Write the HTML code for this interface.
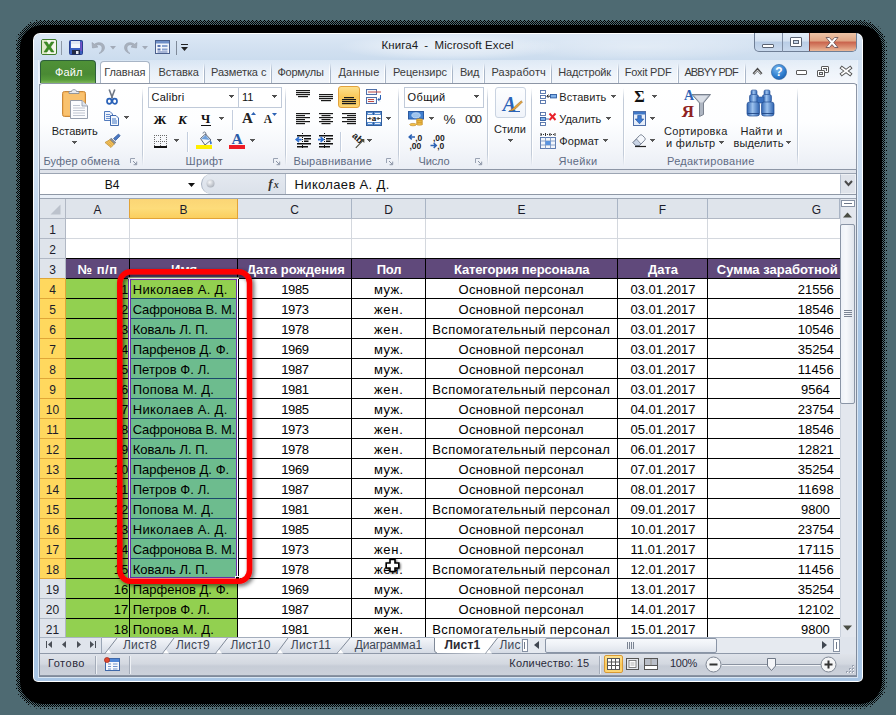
<!DOCTYPE html>
<html><head><meta charset="utf-8"><title>Excel</title>
<style>
*{box-sizing:border-box;margin:0;padding:0}
html,body{width:896px;height:715px;overflow:hidden}
body{background:#4e6a72;font-family:"Liberation Sans",sans-serif;font-size:12px;color:#1e1e1e;position:relative}
.abs{position:absolute}
.t{position:absolute;white-space:nowrap;line-height:1}
svg{position:absolute;overflow:visible}

</style></head>
<body>
<!-- dithered drop shadow -->
<svg style="left:0;top:0" width="896" height="715">
<defs>
<pattern id="d1" width="4" height="4" patternUnits="userSpaceOnUse"><rect x="0" y="0" width="1" height="1" fill="#000"/><rect x="2" y="2" width="1" height="1" fill="#000"/></pattern>
<pattern id="d2" width="2" height="2" patternUnits="userSpaceOnUse"><rect x="0" y="0" width="1" height="1" fill="#000"/><rect x="1" y="1" width="1" height="1" fill="#000"/></pattern>
</defs>
<rect x="15" y="19" width="872" height="690" rx="27" fill="url(#d1)"/>
<rect x="17" y="21" width="868" height="686" rx="25" fill="url(#d2)"/>
<rect x="20" y="25" width="862" height="679" rx="22" fill="#000"/>
</svg>
<!-- window frame -->
<div class="abs" id="win" style="left:33px;top:33px;width:830px;height:649px;border-radius:7px 7px 5px 5px;background:#fff;"></div>
<div class="abs" style="left:34px;top:34px;width:828px;height:647px;border-radius:6px 6px 4px 4px;background:linear-gradient(#d9e6f4 0px,#d3e2f3 50px,#cbddf1 140px,#bdd3ec 200px,#adc9e6 250px,#a8c5e4 300px,#a8c5e4 100%);"></div>
<!-- inner light line -->
<div class="abs" style="left:38px;top:60px;width:820px;height:618px;background:rgba(255,255,255,0.55)"></div>
<!-- client area -->
<div class="abs" style="left:39px;top:84px;width:818px;height:593px;background:#7f8a9b"></div>
<div class="abs" style="left:40px;top:60px;width:816px;height:616px;background:#dfe4ec"></div>
<!-- title bar -->
<div class="abs" style="left:34px;top:34px;width:828px;height:26px;border-radius:6px 6px 0 0;background:linear-gradient(#dce8f5,#d3e1f1 50%,#cbdcee)"></div>
<div class="abs" style="left:340px;top:34px;width:220px;height:26px;background:radial-gradient(ellipse at center,rgba(255,255,255,0.55) 0,rgba(255,255,255,0.3) 45%,rgba(255,255,255,0) 72%)"></div>
<div class="abs" style="left:520px;top:34px;width:240px;height:26px;background:radial-gradient(ellipse at center,rgba(255,255,255,0.35) 0,rgba(255,255,255,0.15) 50%,rgba(255,255,255,0) 75%)"></div>
<!-- excel icon -->
<svg style="left:41px;top:39px" width="16" height="16" viewBox="0 0 16 16">
<rect x="0.5" y="0.5" width="15" height="15" rx="1.5" fill="#f4f7ea" stroke="#3f7d2c"/>
<rect x="1" y="1" width="5" height="14" fill="#dfe9c8"/>
<path d="M3 3 L6 3 L8 6.3 L10.2 3 L13 3 L9.6 8 L13 13 L10.2 13 L8 9.7 L6 13 L3 13 L6.4 8 Z" fill="#3c8f22" stroke="#2c6e18" stroke-width="0.5"/>
</svg>
<div class="abs" style="left:61px;top:41px;width:1px;height:14px;background:#8e9aa8"></div>
<!-- save icon -->
<svg style="left:69px;top:40px" width="14" height="15" viewBox="0 0 14 15">
<rect x="0.5" y="0.5" width="13" height="14" rx="1" fill="#3b5fc0" stroke="#27408f"/>
<rect x="2" y="1" width="9" height="7" fill="#f3f6fb"/>
<rect x="2" y="1" width="9" height="3" fill="#dfe6f2"/>
<rect x="3" y="10" width="8" height="4.5" fill="#222a44"/>
<rect x="7" y="11" width="2.5" height="3" fill="#e8ecf4"/>
<rect x="11.5" y="2" width="1.5" height="9" fill="#7a4fc4"/>
</svg>
<!-- undo -->
<svg style="left:91px;top:40px" width="16" height="15" viewBox="0 0 16 15">
<path d="M1 2.5 L1.5 8 L7 7 L5 5.6 C7.5 4 10.5 4.6 11 7.5 C11.4 10 10 12.3 8 13.5 C11.5 12.8 13.8 10 13.4 6.8 C12.8 2.6 7.8 1.4 3.4 4.2 Z" fill="#a9b1bd" stroke="#979fad" stroke-width="0.6"/>
</svg>
<svg style="left:110px;top:46px" width="6" height="4" viewBox="0 0 6 4"><path d="M0 0H6L3 3.5Z" fill="#a3abb8"/></svg>
<!-- redo -->
<svg style="left:122px;top:40px" width="16" height="15" viewBox="0 0 16 15">
<path d="M15 2.5 L14.5 8 L9 7 L11 5.6 C8.5 4 5.5 4.6 5 7.5 C4.6 10 6 12.3 8 13.5 C4.5 12.8 2.2 10 2.6 6.8 C3.2 2.6 8.2 1.4 12.6 4.2 Z" fill="#a9b1bd" stroke="#979fad" stroke-width="0.6"/>
</svg>
<svg style="left:142px;top:46px" width="6" height="4" viewBox="0 0 6 4"><path d="M0 0H6L3 3.5Z" fill="#a3abb8"/></svg>
<!-- form icon -->
<svg style="left:155px;top:40px" width="15" height="14" viewBox="0 0 15 14">
<rect x="0.5" y="0.5" width="14" height="13" fill="#f2f5fb" stroke="#4a5f8c"/>
<rect x="1" y="1" width="13" height="2.5" fill="#6f8fc8"/>
<rect x="2.5" y="5" width="3" height="2" fill="#5a76b3"/><rect x="7" y="5" width="5.5" height="2" fill="#8aa2cf"/>
<rect x="2.5" y="8.5" width="3" height="2" fill="#5a76b3"/><rect x="7" y="8.5" width="5.5" height="2" fill="#8aa2cf"/>
<rect x="2.5" y="11.5" width="10" height="1" fill="#5a76b3"/>
</svg>
<div class="abs" style="left:176px;top:41px;width:1px;height:14px;background:#7f8a99"></div>
<!-- customize qat arrow -->
<div class="abs" style="left:181px;top:44px;width:7px;height:1px;background:#222"></div>
<svg style="left:181px;top:47px" width="7" height="4" viewBox="0 0 7 4"><path d="M0 0H7L3.5 4Z" fill="#222"/></svg>
<!-- title text -->
<div class="t" style="left:381.60px;top:40.27px;font-size:11.5px;line-height:11.5px;color:#1b1b1b;letter-spacing:0.064px;">Книга4</div>
<div class="t" style="left:424.30px;top:40.27px;font-size:11.5px;line-height:11.5px;color:#1b1b1b;">-</div>
<div class="t" style="left:434.60px;top:40.27px;font-size:11.5px;line-height:11.5px;color:#1b1b1b;letter-spacing:0.069px;">Microsoft Excel</div>
<!-- caption buttons -->
<div class="abs" style="left:754px;top:33px;width:103px;height:19px;border-radius:0 0 5px 5px;border:1px solid #6f7f96;border-top:none;background:linear-gradient(#e3edf8,#d5e2f1 45%,#b9cde6 50%,#c9d9ed)"></div>
<div class="abs" style="left:782px;top:33px;width:1px;height:19px;background:#7f8da3"></div>
<div class="abs" style="left:809px;top:33px;width:47px;height:18px;border-radius:0 0 4px 0;border-left:1px solid #8a4034;background:linear-gradient(#ecc3a6,#e0a584 45%,#c9624c 50%,#d98a6e 75%,#eab898)"></div>
<!-- minimize glyph -->
<div class="abs" style="left:762px;top:44px;width:12px;height:4px;border:1px solid #5a6373;background:#fff;border-radius:1px"></div>
<!-- maximize glyph -->
<div class="abs" style="left:790px;top:37px;width:12px;height:10px;border:1px solid #5a6373;background:#fff;border-radius:1px"></div>
<div class="abs" style="left:793px;top:40px;width:6px;height:4px;border:1px solid #5a6373;background:#c8d7ea"></div>
<!-- close X -->
<svg style="left:825px;top:37px" width="14" height="11" viewBox="0 0 14 11"><path d="M1 0.5H4.4L7 3.4L9.6 0.5H13L8.8 5.5L13 10.5H9.6L7 7.6L4.4 10.5H1L5.2 5.5Z" fill="#fff" stroke="#5c4a52" stroke-width="0.8"/></svg>
<!-- ribbon tabs -->
<div class="abs" style="left:39px;top:60px;width:818px;height:24px;background:linear-gradient(90deg,rgba(255,255,255,0) 0,rgba(255,255,255,0.35) 100%),linear-gradient(#d6e4f3,#e6eef8 45%,#f2f6fb);"></div>
<div class="abs" style="left:40px;top:60px;width:56px;height:23px;background:linear-gradient(#4f9137,#4a8a34 60%,#569a3a 85%,#7fb85a);border-radius:4px 4px 0 0;border:1px solid #2d5f3a;border-bottom:none"></div>
<div class="t" style="left:55.00px;top:66.69px;font-size:11px;line-height:11px;color:#ffffff;letter-spacing:0.113px;">Файл</div>
<div class="abs" style="left:100px;top:61px;width:50px;height:24px;background:#ffffff;border:1px solid #a8b5c6;border-bottom:none;border-radius:4px 4px 0 0"></div>
<div class="t" style="left:104.30px;top:66.69px;font-size:11px;line-height:11px;color:#3b3b3b;letter-spacing:-0.125px;">Главная</div>
<div class="t" style="left:158.50px;top:66.69px;font-size:11px;line-height:11px;color:#3b3b3b;letter-spacing:-0.099px;">Вставка</div>
<div class="t" style="left:211.00px;top:66.69px;font-size:11px;line-height:11px;color:#3b3b3b;letter-spacing:-0.079px;">Разметка с</div>
<div class="t" style="left:277.40px;top:66.69px;font-size:11px;line-height:11px;color:#3b3b3b;letter-spacing:-0.239px;">Формулы</div>
<div class="t" style="left:338.40px;top:66.69px;font-size:11px;line-height:11px;color:#3b3b3b;letter-spacing:0.225px;">Данные</div>
<div class="t" style="left:393.00px;top:66.69px;font-size:11px;line-height:11px;color:#3b3b3b;letter-spacing:-0.017px;">Рецензирс</div>
<div class="t" style="left:460.00px;top:66.69px;font-size:11px;line-height:11px;color:#3b3b3b;letter-spacing:-0.302px;">Вид</div>
<div class="t" style="left:491.40px;top:66.69px;font-size:11px;line-height:11px;color:#3b3b3b;letter-spacing:0.155px;">Разработч</div>
<div class="t" style="left:558.30px;top:66.69px;font-size:11px;line-height:11px;color:#3b3b3b;letter-spacing:-0.169px;">Надстройк</div>
<div class="t" style="left:624.70px;top:66.69px;font-size:11px;line-height:11px;color:#3b3b3b;letter-spacing:-0.245px;">Foxit PDF</div>
<div class="t" style="left:684.40px;top:66.69px;font-size:11px;line-height:11px;color:#3b3b3b;letter-spacing:-0.916px;">ABBYY PDF</div>
<div class="abs" style="left:203px;top:63px;width:1px;height:20px;background:linear-gradient(rgba(255,255,255,0),#ffffff 40%,#ffffff);"></div>
<div class="abs" style="left:204px;top:63px;width:1px;height:20px;background:linear-gradient(rgba(160,175,195,0),#a9b6c8 40%,#a9b6c8);"></div>
<div class="abs" style="left:270px;top:63px;width:1px;height:20px;background:linear-gradient(rgba(255,255,255,0),#ffffff 40%,#ffffff);"></div>
<div class="abs" style="left:271px;top:63px;width:1px;height:20px;background:linear-gradient(rgba(160,175,195,0),#a9b6c8 40%,#a9b6c8);"></div>
<div class="abs" style="left:329px;top:63px;width:1px;height:20px;background:linear-gradient(rgba(255,255,255,0),#ffffff 40%,#ffffff);"></div>
<div class="abs" style="left:330px;top:63px;width:1px;height:20px;background:linear-gradient(rgba(160,175,195,0),#a9b6c8 40%,#a9b6c8);"></div>
<div class="abs" style="left:384px;top:63px;width:1px;height:20px;background:linear-gradient(rgba(255,255,255,0),#ffffff 40%,#ffffff);"></div>
<div class="abs" style="left:385px;top:63px;width:1px;height:20px;background:linear-gradient(rgba(160,175,195,0),#a9b6c8 40%,#a9b6c8);"></div>
<div class="abs" style="left:451px;top:63px;width:1px;height:20px;background:linear-gradient(rgba(255,255,255,0),#ffffff 40%,#ffffff);"></div>
<div class="abs" style="left:452px;top:63px;width:1px;height:20px;background:linear-gradient(rgba(160,175,195,0),#a9b6c8 40%,#a9b6c8);"></div>
<div class="abs" style="left:483px;top:63px;width:1px;height:20px;background:linear-gradient(rgba(255,255,255,0),#ffffff 40%,#ffffff);"></div>
<div class="abs" style="left:484px;top:63px;width:1px;height:20px;background:linear-gradient(rgba(160,175,195,0),#a9b6c8 40%,#a9b6c8);"></div>
<div class="abs" style="left:550px;top:63px;width:1px;height:20px;background:linear-gradient(rgba(255,255,255,0),#ffffff 40%,#ffffff);"></div>
<div class="abs" style="left:551px;top:63px;width:1px;height:20px;background:linear-gradient(rgba(160,175,195,0),#a9b6c8 40%,#a9b6c8);"></div>
<div class="abs" style="left:617px;top:63px;width:1px;height:20px;background:linear-gradient(rgba(255,255,255,0),#ffffff 40%,#ffffff);"></div>
<div class="abs" style="left:618px;top:63px;width:1px;height:20px;background:linear-gradient(rgba(160,175,195,0),#a9b6c8 40%,#a9b6c8);"></div>
<div class="abs" style="left:677px;top:63px;width:1px;height:20px;background:linear-gradient(rgba(255,255,255,0),#ffffff 40%,#ffffff);"></div>
<div class="abs" style="left:678px;top:63px;width:1px;height:20px;background:linear-gradient(rgba(160,175,195,0),#a9b6c8 40%,#a9b6c8);"></div>
<div class="abs" style="left:744px;top:63px;width:1px;height:20px;background:linear-gradient(rgba(255,255,255,0),#ffffff 40%,#ffffff);"></div>
<div class="abs" style="left:745px;top:63px;width:1px;height:20px;background:linear-gradient(rgba(160,175,195,0),#a9b6c8 40%,#a9b6c8);"></div>
<svg style="left:752px;top:67px" width="11" height="9" viewBox="0 0 11 9"><path d="M1.5 7L5.5 2.5L9.5 7" fill="none" stroke="#4a4a4a" stroke-width="2.6" stroke-linejoin="miter"/><path d="M2.2 6.6L5.5 3.2L8.8 6.6" fill="none" stroke="#fff" stroke-width="0.9"/></svg>
<svg style="left:771px;top:64px" width="16" height="16" viewBox="0 0 16 16"><defs><radialGradient id="hg" cx="0.4" cy="0.3" r="0.8"><stop offset="0" stop-color="#7db9ee"/><stop offset="0.6" stop-color="#2f7fd0"/><stop offset="1" stop-color="#1b5aa6"/></radialGradient></defs><circle cx="8" cy="8" r="7.6" fill="url(#hg)" stroke="#2a5f9e" stroke-width="0.6"/><text x="8" y="12.2" font-family="Liberation Sans" font-weight="bold" font-size="12" fill="#fff" text-anchor="middle">?</text></svg>
<div class="abs" style="left:796px;top:70px;width:11px;height:5px;background:#fff;border:1px solid #5a5a5a;border-radius:1px"></div>
<div class="abs" style="left:821px;top:66px;width:8px;height:7px;background:#fff;border:1px solid #5a5a5a;border-radius:1px"></div>
<div class="abs" style="left:823px;top:68px;width:4px;height:3px;background:#e9eef5;border:1px solid #5a5a5a;border-width:1px 1px 0 0"></div>
<div class="abs" style="left:817px;top:70px;width:8px;height:7px;background:#fff;border:1px solid #5a5a5a;border-radius:1px"></div>
<div class="abs" style="left:819px;top:72px;width:4px;height:3px;background:#e9eef5;border:1px solid #5a5a5a"></div>
<svg style="left:840px;top:66px" width="12" height="10" viewBox="0 0 12 10"><path d="M2 2L10 8M10 2L2 8" stroke="#555" stroke-width="3.6" stroke-linecap="square"/><path d="M2 2L10 8M10 2L2 8" stroke="#fff" stroke-width="1.7" stroke-linecap="square"/></svg>
<!-- ribbon body -->
<div class="abs" style="left:39px;top:83px;width:818px;height:87px;background:linear-gradient(#ffffff 0,#fdfeff 45%,#f4f6fa 75%,#eaeef5 100%);border:1px solid #8d96a6;border-radius:3px 3px 0 0"></div>
<svg style="left:61px;top:88px" width="28" height="32" viewBox="0 0 28 32"><rect x="1.5" y="3.5" width="23" height="25" rx="2" fill="#f6b45a" stroke="#c98a3c"/><rect x="3" y="5" width="20" height="22" rx="1" fill="#fbc877" opacity="0.7"/><path d="M8 5.5V3.5H10.5C10.5 1 15.5 1 15.5 3.5H18V5.5Z" fill="#e8ebf0" stroke="#7e8794" stroke-width="0.8"/><path d="M9.5 12.5H21L26.5 18V30.5H9.5Z" fill="#fbfcfe" stroke="#8a94a5" stroke-width="0.9"/><path d="M21 12.5V18H26.5" fill="#dfe5ee" stroke="#8a94a5" stroke-width="0.8"/><path d="M12 17.5H19M12 20H24M12 22.5H24M12 25H24M12 27.5H24" stroke="#b9c0cc" stroke-width="0.9"/></svg>
<div class="t" style="left:51.70px;top:125.69px;font-size:11px;line-height:11px;color:#1e1e1e;letter-spacing:-0.080px;">Вставить</div>
<svg style="left:72px;top:141px" width="5" height="3" viewBox="0 0 5 3" shape-rendering="crispEdges"><path d="M0 0H5L2.5 3Z" fill="#555"/></svg>
<svg style="left:106px;top:89px" width="12" height="16" viewBox="0 0 12 16"><path d="M3.2 0.5L6.6 9.5M8.8 0.5L5.4 9.5" stroke="#6d7684" stroke-width="1.6" fill="none"/><ellipse cx="3.3" cy="12.2" rx="2.3" ry="2.6" fill="none" stroke="#2a62b8" stroke-width="1.7"/><ellipse cx="8.7" cy="12.2" rx="2.3" ry="2.6" fill="none" stroke="#2a62b8" stroke-width="1.7"/></svg>
<svg style="left:104px;top:111px" width="16" height="15" viewBox="0 0 16 15"><path d="M0.5 0.5H6L8.5 3V9.5H0.5Z" fill="#eef3fb" stroke="#3f6cb5" stroke-width="0.9"/><path d="M2 3.5H6M2 5.5H7M2 7.5H7" stroke="#5a86cc" stroke-width="0.9"/><path d="M6.5 4.5H12L14.5 7V14.5H6.5Z" fill="#f4f8fd" stroke="#2d5aa6" stroke-width="0.9"/><path d="M8 8H12M8 10H13M8 12H13" stroke="#3f74c4" stroke-width="1"/></svg>
<svg style="left:124px;top:116px" width="5" height="3" viewBox="0 0 5 3" shape-rendering="crispEdges"><path d="M0 0H5L2.5 3Z" fill="#555"/></svg>
<svg style="left:104px;top:133px" width="17" height="15" viewBox="0 0 17 15"><path d="M9.5 5.5L14.5 1L16.2 2.8L11.5 7.5Z" fill="#4a78c2" stroke="#2f5596" stroke-width="0.7"/><path d="M7.2 5.2L11.8 9.5L10.2 11L5.8 6.8Z" fill="#8a8f98" stroke="#5e636d" stroke-width="0.6"/><path d="M5.8 6.8L10.2 11L7 14.5L1 9.5Z" fill="#f2c15c" stroke="#b98a2e" stroke-width="0.7"/><path d="M3 9.5L7 13M4.5 8.3L8.5 12" stroke="#d79c3a" stroke-width="0.7"/></svg>
<div class="t" style="left:43.40px;top:155.69px;font-size:11px;line-height:11px;color:#5f6c84;letter-spacing:0.129px;">Буфер обмена</div>
<svg style="left:130px;top:158px" width="8" height="8" viewBox="0 0 8 8"><path d="M0.5 5V0.5H5" fill="none" stroke="#9aa3b3"/><path d="M3 3L6.3 6.3M6.7 3.6V6.7H3.6" fill="none" stroke="#8b94a5" stroke-width="1"/></svg>
<div class="abs" style="left:142px;top:88px;width:1px;height:78px;background:linear-gradient(rgba(180,192,210,0),#c3ccd9 15%,#c3ccd9 85%,rgba(180,192,210,0));"></div>
<div class="abs" style="left:143px;top:88px;width:1px;height:78px;background:linear-gradient(rgba(255,255,255,0),#fff 15%,#fff 85%,rgba(255,255,255,0));"></div>
<div class="abs" style="left:148px;top:87px;width:91px;height:21px;background:#fff;border:1px solid #c0cad9"></div>
<div class="abs" style="left:238px;top:87px;width:44px;height:21px;background:#fff;border:1px solid #c0cad9"></div>
<div class="t" style="left:151.50px;top:92.19px;font-size:11px;line-height:11px;color:#111;letter-spacing:0.259px;">Calibri</div>
<div class="t" style="left:242.00px;top:92.19px;font-size:11px;line-height:11px;color:#111;letter-spacing:0.039px;">11</div>
<svg style="left:229px;top:95px" width="5" height="3" viewBox="0 0 5 3" shape-rendering="crispEdges"><path d="M0 0H5L2.5 3Z" fill="#4d4d4d"/></svg>
<svg style="left:272px;top:95px" width="5" height="3" viewBox="0 0 5 3" shape-rendering="crispEdges"><path d="M0 0H5L2.5 3Z" fill="#4d4d4d"/></svg>
<div class="t" style="left:153.57px;top:113.00px;font-size:13px;line-height:13px;color:#111;font-weight:bold;font-family:'Liberation Serif',serif;">Ж</div>
<div class="t" style="left:178.09px;top:113.00px;font-size:13px;line-height:13px;color:#111;font-weight:bold;font-style:italic;font-family:'Liberation Serif',serif;">К</div>
<div class="t" style="left:200.91px;top:112.92px;font-size:12.5px;line-height:12.5px;color:#111;font-weight:bold;font-family:'Liberation Serif',serif;">Ч</div>
<div class="abs" style="left:201px;top:125px;width:10px;height:1px;background:#111;"></div>
<svg style="left:219px;top:117px" width="5" height="3" viewBox="0 0 5 3" shape-rendering="crispEdges"><path d="M0 0H5L2.5 3Z" fill="#555"/></svg>
<div class="abs" style="left:232px;top:110px;width:1px;height:20px;background:#c4cede;"></div>
<div class="abs" style="left:233px;top:110px;width:1px;height:20px;background:#fff;"></div>
<div class="t" style="left:242.08px;top:111.30px;font-size:15px;line-height:15px;color:#222;font-weight:bold;font-family:'Liberation Serif',serif;">A</div>
<svg style="left:251px;top:112px" width="5" height="3" viewBox="0 0 5 3"><path d="M0 3H5L2.5 0Z" fill="#2c62b4"/></svg>
<div class="t" style="left:263.84px;top:114.27px;font-size:11.5px;line-height:11.5px;color:#222;font-weight:bold;font-family:'Liberation Serif',serif;">A</div>
<svg style="left:272px;top:113px" width="5" height="3" viewBox="0 0 5 3"><path d="M0 0H5L2.5 3Z" fill="#2c62b4"/></svg>
<svg style="left:154px;top:135px" width="13" height="13" viewBox="0 0 13 13" shape-rendering="crispEdges"><rect x="0" y="0" width="1" height="1" fill="#6b6b6b"/><rect x="0" y="6" width="1" height="1" fill="#6b6b6b"/><rect x="0" y="0" width="1" height="1" fill="#6b6b6b"/><rect x="6" y="0" width="1" height="1" fill="#6b6b6b"/><rect x="12" y="0" width="1" height="1" fill="#6b6b6b"/><rect x="2" y="0" width="1" height="1" fill="#6b6b6b"/><rect x="2" y="6" width="1" height="1" fill="#6b6b6b"/><rect x="0" y="2" width="1" height="1" fill="#6b6b6b"/><rect x="6" y="2" width="1" height="1" fill="#6b6b6b"/><rect x="12" y="2" width="1" height="1" fill="#6b6b6b"/><rect x="4" y="0" width="1" height="1" fill="#6b6b6b"/><rect x="4" y="6" width="1" height="1" fill="#6b6b6b"/><rect x="0" y="4" width="1" height="1" fill="#6b6b6b"/><rect x="6" y="4" width="1" height="1" fill="#6b6b6b"/><rect x="12" y="4" width="1" height="1" fill="#6b6b6b"/><rect x="6" y="0" width="1" height="1" fill="#6b6b6b"/><rect x="6" y="6" width="1" height="1" fill="#6b6b6b"/><rect x="0" y="6" width="1" height="1" fill="#6b6b6b"/><rect x="6" y="6" width="1" height="1" fill="#6b6b6b"/><rect x="12" y="6" width="1" height="1" fill="#6b6b6b"/><rect x="8" y="0" width="1" height="1" fill="#6b6b6b"/><rect x="8" y="6" width="1" height="1" fill="#6b6b6b"/><rect x="0" y="8" width="1" height="1" fill="#6b6b6b"/><rect x="6" y="8" width="1" height="1" fill="#6b6b6b"/><rect x="12" y="8" width="1" height="1" fill="#6b6b6b"/><rect x="10" y="0" width="1" height="1" fill="#6b6b6b"/><rect x="10" y="6" width="1" height="1" fill="#6b6b6b"/><rect x="0" y="10" width="1" height="1" fill="#6b6b6b"/><rect x="6" y="10" width="1" height="1" fill="#6b6b6b"/><rect x="12" y="10" width="1" height="1" fill="#6b6b6b"/><rect x="12" y="0" width="1" height="1" fill="#6b6b6b"/><rect x="12" y="6" width="1" height="1" fill="#6b6b6b"/><rect x="0" y="12" width="1" height="1" fill="#6b6b6b"/><rect x="6" y="12" width="1" height="1" fill="#6b6b6b"/><rect x="12" y="12" width="1" height="1" fill="#6b6b6b"/><rect x="0" y="11" width="13" height="2" fill="#111"/></svg>
<svg style="left:174px;top:139px" width="5" height="3" viewBox="0 0 5 3" shape-rendering="crispEdges"><path d="M0 0H5L2.5 3Z" fill="#555"/></svg>
<div class="abs" style="left:187px;top:132px;width:1px;height:20px;background:#c4cede;"></div>
<div class="abs" style="left:188px;top:132px;width:1px;height:20px;background:#fff;"></div>
<svg style="left:196px;top:132px" width="17" height="17" viewBox="0 0 17 17"><path d="M4.5 6.5L9.5 2L15 8L9 13Z" fill="#f4f7fb" stroke="#5b6678" stroke-width="1"/><path d="M7 1.5C7 -0.5 9.8 -0.5 9.8 1.5V7" fill="none" stroke="#5b6678" stroke-width="0.9"/><path d="M5 7L9.4 3.2L14 8Z" fill="#6ea0dc"/><path d="M14.5 8.5C16.2 10 16.2 12 15 12.4C13.8 12 13.4 10.4 14.5 8.5Z" fill="#3b76c8"/></svg>
<div class="abs" style="left:196px;top:145px;width:16px;height:4px;background:#ffef00;"></div>
<svg style="left:217px;top:139px" width="5" height="3" viewBox="0 0 5 3" shape-rendering="crispEdges"><path d="M0 0H5L2.5 3Z" fill="#555"/></svg>
<div class="t" style="left:231.40px;top:131.38px;font-size:15.5px;line-height:15.5px;color:#2a5ba8;font-weight:bold;font-family:'Liberation Serif',serif;">A</div>
<div class="abs" style="left:229px;top:145px;width:16px;height:4px;background:#ee1c25;"></div>
<svg style="left:250px;top:139px" width="5" height="3" viewBox="0 0 5 3" shape-rendering="crispEdges"><path d="M0 0H5L2.5 3Z" fill="#555"/></svg>
<div class="t" style="left:185.50px;top:155.69px;font-size:11px;line-height:11px;color:#5f6c84;letter-spacing:0.359px;">Шрифт</div>
<svg style="left:273px;top:158px" width="8" height="8" viewBox="0 0 8 8"><path d="M0.5 5V0.5H5" fill="none" stroke="#9aa3b3"/><path d="M3 3L6.3 6.3M6.7 3.6V6.7H3.6" fill="none" stroke="#8b94a5" stroke-width="1"/></svg>
<div class="abs" style="left:285px;top:88px;width:1px;height:78px;background:linear-gradient(rgba(180,192,210,0),#c3ccd9 15%,#c3ccd9 85%,rgba(180,192,210,0));"></div>
<div class="abs" style="left:286px;top:88px;width:1px;height:78px;background:linear-gradient(rgba(255,255,255,0),#fff 15%,#fff 85%,rgba(255,255,255,0));"></div>
<svg style="left:296px;top:90px" width="16" height="8" viewBox="0 0 16 8"><rect x="0" y="0" width="14" height="1.2" fill="#1a1a1a"/><rect x="0" y="2" width="14" height="1.2" fill="#1a1a1a"/><rect x="0" y="4" width="14" height="1.2" fill="#1a1a1a"/><rect x="2" y="6" width="10" height="1.2" fill="#1a1a1a"/></svg>
<svg style="left:319px;top:94px" width="16" height="8" viewBox="0 0 16 8"><rect x="0" y="0" width="14" height="1.2" fill="#1a1a1a"/><rect x="0" y="2" width="14" height="1.2" fill="#1a1a1a"/><rect x="0" y="4" width="14" height="1.2" fill="#1a1a1a"/><rect x="2" y="6" width="10" height="1.2" fill="#1a1a1a"/></svg>
<div class="abs" style="left:338px;top:86px;width:22px;height:22px;background:linear-gradient(#fde08c,#fbc95a 50%,#fcd572);border:1px solid #e3a23c;border-radius:3px"></div>
<svg style="left:342px;top:97px" width="16" height="8" viewBox="0 0 16 8"><rect x="2" y="0" width="10" height="1.2" fill="#1a1a1a"/><rect x="0" y="2" width="14" height="1.2" fill="#1a1a1a"/><rect x="0" y="4" width="14" height="1.2" fill="#1a1a1a"/><rect x="0" y="6" width="14" height="1.2" fill="#1a1a1a"/></svg>
<svg style="left:366px;top:89px" width="16" height="15" viewBox="0 0 16 15"><rect x="0.5" y="0.5" width="10" height="5" fill="#f4f7fc" stroke="#4f6fa8"/><rect x="0.5" y="8.5" width="10" height="6" fill="#f4f7fc" stroke="#4f6fa8"/><path d="M2 3H15M2 10.5H8M2 12.5H8" stroke="#c04a44" stroke-width="1"/><path d="M14.5 6V10.5H12M13.5 8.8L12 10.5L13.5 12.2" stroke="#2c62b4" stroke-width="1" fill="none"/></svg>
<svg style="left:296px;top:113px" width="16" height="12" viewBox="0 0 16 12"><rect x="0" y="0" width="14" height="1.2" fill="#1a1a1a"/><rect x="0" y="2" width="9" height="1.2" fill="#1a1a1a"/><rect x="0" y="4" width="14" height="1.2" fill="#1a1a1a"/><rect x="0" y="6" width="9" height="1.2" fill="#1a1a1a"/><rect x="0" y="8" width="14" height="1.2" fill="#1a1a1a"/><rect x="0" y="10" width="9" height="1.2" fill="#1a1a1a"/></svg>
<svg style="left:319px;top:113px" width="16" height="12" viewBox="0 0 16 12"><rect x="0" y="0" width="14" height="1.2" fill="#1a1a1a"/><rect x="2.5" y="2" width="9" height="1.2" fill="#1a1a1a"/><rect x="0" y="4" width="14" height="1.2" fill="#1a1a1a"/><rect x="2.5" y="6" width="9" height="1.2" fill="#1a1a1a"/><rect x="0" y="8" width="14" height="1.2" fill="#1a1a1a"/><rect x="2.5" y="10" width="9" height="1.2" fill="#1a1a1a"/></svg>
<svg style="left:342px;top:113px" width="16" height="12" viewBox="0 0 16 12"><rect x="0" y="0" width="14" height="1.2" fill="#1a1a1a"/><rect x="5" y="2" width="9" height="1.2" fill="#1a1a1a"/><rect x="0" y="4" width="14" height="1.2" fill="#1a1a1a"/><rect x="5" y="6" width="9" height="1.2" fill="#1a1a1a"/><rect x="0" y="8" width="14" height="1.2" fill="#1a1a1a"/><rect x="5" y="10" width="9" height="1.2" fill="#1a1a1a"/></svg>
<svg style="left:366px;top:111px" width="16" height="15" viewBox="0 0 16 15"><rect x="0.5" y="0.5" width="15" height="14" fill="#fff" stroke="#2f5d9e"/><rect x="1" y="1" width="14" height="3" fill="#5b8fd0"/><rect x="1" y="11" width="14" height="3" fill="#5b8fd0"/><path d="M2 2.5H6M9 2.5H14M2 12.5H6M9 12.5H14" stroke="#e6eefa" stroke-width="1"/><path d="M7.5 1V4M7.5 11V14" stroke="#2f5d9e" stroke-width="1"/><text x="8" y="10.3" font-family="Liberation Serif" font-weight="bold" font-size="9" text-anchor="middle" fill="#111">a</text><path d="M1.5 7.5H4.6M11.4 7.5H14.5M3.4 6L4.9 7.5L3.4 9M12.6 6L11.1 7.5L12.6 9" stroke="#222" stroke-width="0.9" fill="none"/></svg>
<svg style="left:386px;top:117px" width="5" height="3" viewBox="0 0 5 3" shape-rendering="crispEdges"><path d="M0 0H5L2.5 3Z" fill="#555"/></svg>
<svg style="left:297px;top:133px" width="15" height="15" viewBox="0 0 15 15"><rect x="0" y="2" width="14" height="1.5" fill="#111"/><rect x="7" y="5" width="7" height="1.5" fill="#111"/><rect x="7" y="7.5" width="4.5" height="1.5" fill="#111"/><rect x="0" y="10" width="14" height="1.5" fill="#111"/><rect x="0" y="13" width="11" height="1.5" fill="#111"/><rect x="5" y="0" width="1" height="1" fill="#111"/><rect x="5" y="2" width="1" height="1" fill="#111"/><rect x="5" y="4" width="1" height="1" fill="#111"/><rect x="5" y="6" width="1" height="1" fill="#111"/><rect x="5" y="8" width="1" height="1" fill="#111"/><rect x="5" y="10" width="1" height="1" fill="#111"/><rect x="5" y="12" width="1" height="1" fill="#111"/><rect x="5" y="14" width="1" height="1" fill="#111"/><path d="M4.6 6.6H0M2 4.2L-0.8 6.6L2 9" stroke="#2f6fd0" stroke-width="1.6" fill="none"/></svg>
<svg style="left:319px;top:133px" width="15" height="15" viewBox="0 0 15 15"><rect x="0" y="2" width="14" height="1.5" fill="#111"/><rect x="7" y="5" width="7" height="1.5" fill="#111"/><rect x="7" y="7.5" width="4.5" height="1.5" fill="#111"/><rect x="0" y="10" width="14" height="1.5" fill="#111"/><rect x="0" y="13" width="11" height="1.5" fill="#111"/><rect x="5" y="0" width="1" height="1" fill="#111"/><rect x="5" y="2" width="1" height="1" fill="#111"/><rect x="5" y="4" width="1" height="1" fill="#111"/><rect x="5" y="6" width="1" height="1" fill="#111"/><rect x="5" y="8" width="1" height="1" fill="#111"/><rect x="5" y="10" width="1" height="1" fill="#111"/><rect x="5" y="12" width="1" height="1" fill="#111"/><rect x="5" y="14" width="1" height="1" fill="#111"/><path d="M-1 6.6H3.6M1.6 4.2L4.4 6.6L1.6 9" stroke="#2f6fd0" stroke-width="1.6" fill="none"/></svg>
<div class="abs" style="left:340px;top:132px;width:1px;height:20px;background:#c4cede;"></div>
<div class="abs" style="left:341px;top:132px;width:1px;height:20px;background:#fff;"></div>
<svg style="left:348px;top:132px" width="18" height="17" viewBox="0 0 18 17"><text x="0" y="0" font-family="Liberation Sans" font-weight="bold" font-size="9.5" fill="#222" transform="translate(3.6,4.6) rotate(42)">ab</text><path d="M7.8 15.8L15.8 7.6" stroke="#4a4a3a" stroke-width="1.1" fill="none"/><path d="M12.4 7H16.3V10.9Z" fill="#4a4a3a"/></svg>
<svg style="left:367px;top:139px" width="5" height="3" viewBox="0 0 5 3" shape-rendering="crispEdges"><path d="M0 0H5L2.5 3Z" fill="#555"/></svg>
<div class="t" style="left:293.40px;top:155.69px;font-size:11px;line-height:11px;color:#5f6c84;letter-spacing:0.240px;">Выравнивание</div>
<svg style="left:386px;top:158px" width="8" height="8" viewBox="0 0 8 8"><path d="M0.5 5V0.5H5" fill="none" stroke="#9aa3b3"/><path d="M3 3L6.3 6.3M6.7 3.6V6.7H3.6" fill="none" stroke="#8b94a5" stroke-width="1"/></svg>
<div class="abs" style="left:398px;top:88px;width:1px;height:78px;background:linear-gradient(rgba(180,192,210,0),#c3ccd9 15%,#c3ccd9 85%,rgba(180,192,210,0));"></div>
<div class="abs" style="left:399px;top:88px;width:1px;height:78px;background:linear-gradient(rgba(255,255,255,0),#fff 15%,#fff 85%,rgba(255,255,255,0));"></div>
<div class="abs" style="left:404px;top:87px;width:80px;height:21px;background:#fff;border:1px solid #c0cad9"></div>
<div class="t" style="left:407.60px;top:92.19px;font-size:11px;line-height:11px;color:#111;letter-spacing:0.359px;">Общий</div>
<svg style="left:474px;top:95px" width="5" height="3" viewBox="0 0 5 3" shape-rendering="crispEdges"><path d="M0 0H5L2.5 3Z" fill="#4d4d4d"/></svg>
<svg style="left:408px;top:111px" width="17" height="16" viewBox="0 0 17 16"><rect x="0.5" y="0.5" width="15" height="7.5" fill="#3f7fd0" stroke="#2c5aa0"/><ellipse cx="8" cy="4.3" rx="4.2" ry="2.6" fill="#9cc3ee" stroke="#dbe9fa" stroke-width="0.6"/><ellipse cx="11.5" cy="9" rx="3.3" ry="1.2" fill="#f5c24a" stroke="#b9821f" stroke-width="0.6"/><ellipse cx="11.5" cy="11" rx="3.3" ry="1.2" fill="#f5c24a" stroke="#b9821f" stroke-width="0.6"/><ellipse cx="11.5" cy="13" rx="3.3" ry="1.2" fill="#f5c24a" stroke="#b9821f" stroke-width="0.6"/><ellipse cx="5" cy="13.6" rx="3.3" ry="1.2" fill="#f5c24a" stroke="#b9821f" stroke-width="0.6"/></svg>
<svg style="left:429px;top:117px" width="5" height="3" viewBox="0 0 5 3" shape-rendering="crispEdges"><path d="M0 0H5L2.5 3Z" fill="#555"/></svg>
<div class="t" style="left:443.49px;top:112.57px;font-size:13.5px;line-height:13.5px;color:#222;">%</div>
<div class="t" style="left:465.25px;top:113.77px;font-size:11.5px;line-height:11.5px;color:#222;letter-spacing:-1.229px;">000</div>
<svg style="left:408px;top:133px" width="18" height="17" viewBox="0 0 18 17"><path d="M7 4H1.5M3.8 1.6L1.2 4L3.8 6.4" stroke="#2c62b4" stroke-width="1.5" fill="none"/><text x="7.2" y="7.5" font-family="Liberation Sans" font-weight="bold" font-size="8.5" fill="#222">,0</text><text x="1.5" y="16" font-family="Liberation Sans" font-weight="bold" font-size="8.5" fill="#222">,00</text></svg>
<svg style="left:430px;top:133px" width="18" height="17" viewBox="0 0 18 17"><text x="3" y="7.5" font-family="Liberation Sans" font-weight="bold" font-size="8.5" fill="#222">,00</text><path d="M0.5 12.5H6M3.7 10.1L6.3 12.5L3.7 14.9" stroke="#2c62b4" stroke-width="1.5" fill="none"/><text x="7.2" y="16" font-family="Liberation Sans" font-weight="bold" font-size="8.5" fill="#222">,0</text></svg>
<div class="t" style="left:418.50px;top:155.69px;font-size:11px;line-height:11px;color:#5f6c84;letter-spacing:-0.128px;">Число</div>
<svg style="left:475px;top:158px" width="8" height="8" viewBox="0 0 8 8"><path d="M0.5 5V0.5H5" fill="none" stroke="#9aa3b3"/><path d="M3 3L6.3 6.3M6.7 3.6V6.7H3.6" fill="none" stroke="#8b94a5" stroke-width="1"/></svg>
<div class="abs" style="left:487px;top:88px;width:1px;height:78px;background:linear-gradient(rgba(180,192,210,0),#c3ccd9 15%,#c3ccd9 85%,rgba(180,192,210,0));"></div>
<div class="abs" style="left:488px;top:88px;width:1px;height:78px;background:linear-gradient(rgba(255,255,255,0),#fff 15%,#fff 85%,rgba(255,255,255,0));"></div>
<div class="abs" style="left:495px;top:87px;width:31px;height:31px;background:linear-gradient(#fdfeff,#f0f4fa);border:1px solid #c9d3e1;border-radius:3px"></div>
<div class="t" style="left:502.83px;top:93.57px;font-size:20px;line-height:20px;color:#2a62b8;font-weight:bold;font-style:italic;font-family:'Liberation Serif',serif;">A</div>
<svg style="left:508px;top:100px" width="16" height="12" viewBox="0 0 16 12"><path d="M1 11C3 11 6 10.5 8 8.5L14.5 2L13.2 0.8L6.5 6.8C4.8 8.6 3 10.2 1 11Z" fill="#e9a23c" stroke="#8a6a2c" stroke-width="0.5"/><path d="M0.5 11.5H12" stroke="#2a62b8" stroke-width="1"/></svg>
<div class="t" style="left:494.00px;top:123.69px;font-size:11px;line-height:11px;color:#1e1e1e;letter-spacing:0.059px;">Стили</div>
<svg style="left:508px;top:139px" width="5" height="3" viewBox="0 0 5 3" shape-rendering="crispEdges"><path d="M0 0H5L2.5 3Z" fill="#555"/></svg>
<div class="abs" style="left:531px;top:88px;width:1px;height:78px;background:linear-gradient(rgba(180,192,210,0),#c3ccd9 15%,#c3ccd9 85%,rgba(180,192,210,0));"></div>
<div class="abs" style="left:532px;top:88px;width:1px;height:78px;background:linear-gradient(rgba(255,255,255,0),#fff 15%,#fff 85%,rgba(255,255,255,0));"></div>
<svg style="left:540px;top:90px" width="17" height="14" viewBox="0 0 17 14"><rect x="0.5" y="0.5" width="5" height="3" fill="#fff" stroke="#4f6fa8" stroke-width="0.9"/><rect x="0.5" y="5.5" width="5" height="3" fill="#fff" stroke="#4f6fa8" stroke-width="0.9"/><rect x="0.5" y="10.5" width="5" height="3" fill="#fff" stroke="#4f6fa8" stroke-width="0.9"/><rect x="10.5" y="4.5" width="6" height="3.4" fill="#7fb0e8" stroke="#2c5aa0" stroke-width="0.9"/><path d="M10 6.2H7M8.4 4.6L6.8 6.2L8.4 7.8" stroke="#222" stroke-width="1" fill="none"/></svg>
<div class="t" style="left:559.30px;top:92.19px;font-size:11px;line-height:11px;color:#1e1e1e;letter-spacing:0.045px;">Вставить</div>
<svg style="left:611px;top:95px" width="5" height="3" viewBox="0 0 5 3" shape-rendering="crispEdges"><path d="M0 0H5L2.5 3Z" fill="#555"/></svg>
<svg style="left:540px;top:112px" width="17" height="14" viewBox="0 0 17 14"><rect x="0.5" y="0.5" width="5" height="3" fill="#fff" stroke="#4f6fa8" stroke-width="0.9"/><rect x="0.5" y="5.5" width="5" height="3" fill="#7fb0e8" stroke="#2c5aa0" stroke-width="0.9"/><rect x="0.5" y="10.5" width="5" height="3" fill="#fff" stroke="#4f6fa8" stroke-width="0.9"/><path d="M6 7H9" stroke="#4f6fa8" stroke-width="1"/><path d="M9.5 1.5L15.5 8M15.5 1.5L9.5 8" stroke="#e8212a" stroke-width="1.9"/></svg>
<div class="t" style="left:559.30px;top:114.19px;font-size:11px;line-height:11px;color:#1e1e1e;">Удалить</div>
<svg style="left:606px;top:117px" width="5" height="3" viewBox="0 0 5 3" shape-rendering="crispEdges"><path d="M0 0H5L2.5 3Z" fill="#555"/></svg>
<svg style="left:540px;top:133px" width="17" height="16" viewBox="0 0 17 16"><path d="M1 1.5H15" stroke="#333" stroke-width="1" stroke-dasharray="1 1"/><path d="M1 0V3M5.5 0V3M10 0V3M15 0V3" stroke="#333" stroke-width="1"/><rect x="0.5" y="4.5" width="15" height="11" fill="#f2f6fc" stroke="#4f6fa8" stroke-width="0.9"/><path d="M0.5 8H15.5M0.5 12H15.5M5.5 4.5V15.5M10.5 4.5V15.5" stroke="#7d97c2" stroke-width="0.9"/><rect x="5.5" y="8" width="5" height="4" fill="#5a94e0"/></svg>
<div class="t" style="left:559.30px;top:136.19px;font-size:11px;line-height:11px;color:#1e1e1e;letter-spacing:0.070px;">Формат</div>
<svg style="left:603px;top:139px" width="5" height="3" viewBox="0 0 5 3" shape-rendering="crispEdges"><path d="M0 0H5L2.5 3Z" fill="#555"/></svg>
<div class="t" style="left:558.50px;top:155.69px;font-size:11px;line-height:11px;color:#5f6c84;letter-spacing:0.349px;">Ячейки</div>
<div class="abs" style="left:623px;top:88px;width:1px;height:78px;background:linear-gradient(rgba(180,192,210,0),#c3ccd9 15%,#c3ccd9 85%,rgba(180,192,210,0));"></div>
<div class="abs" style="left:624px;top:88px;width:1px;height:78px;background:linear-gradient(rgba(255,255,255,0),#fff 15%,#fff 85%,rgba(255,255,255,0));"></div>
<div class="t" style="left:634.27px;top:88.96px;font-size:16px;line-height:16px;color:#111;font-weight:bold;font-family:'Liberation Serif',serif;">Σ</div>
<svg style="left:652px;top:95px" width="5" height="3" viewBox="0 0 5 3" shape-rendering="crispEdges"><path d="M0 0H5L2.5 3Z" fill="#555"/></svg>
<svg style="left:633px;top:111px" width="13" height="15" viewBox="0 0 13 15"><rect x="0.5" y="0.5" width="12" height="14" fill="#e6eefa" stroke="#4f6fa8"/><rect x="1" y="1" width="11" height="2.5" fill="#3f78c8"/><path d="M4.7 4.5H8.3V8H10.8L6.5 12.8L2.2 8H4.7Z" fill="#3b7ad2" stroke="#244f96" stroke-width="0.6"/></svg>
<svg style="left:650px;top:117px" width="5" height="3" viewBox="0 0 5 3" shape-rendering="crispEdges"><path d="M0 0H5L2.5 3Z" fill="#555"/></svg>
<svg style="left:632px;top:134px" width="15" height="13" viewBox="0 0 15 13"><path d="M1 8.5L7.5 1.5C8.5 0.6 9.6 0.6 10.5 1.5L12.6 3.6C13.4 4.5 13.4 5.5 12.6 6.3L7.5 11.5H3.6Z" fill="#f4f7fc" stroke="#6a7486" stroke-width="0.9"/><path d="M1 8.5L4.5 5L8.8 9.8L7.5 11.5H3.6Z" fill="#c9d4e6" stroke="#6a7486" stroke-width="0.7"/><path d="M3 12.5H14" stroke="#222" stroke-width="1.2"/></svg>
<svg style="left:650px;top:139px" width="5" height="3" viewBox="0 0 5 3" shape-rendering="crispEdges"><path d="M0 0H5L2.5 3Z" fill="#555"/></svg>
<svg style="left:680px;top:89px" width="31" height="30" viewBox="0 0 31 30"><text x="9" y="11" font-family="Liberation Serif" font-weight="bold" font-size="14" text-anchor="middle" fill="#2e63b5">А</text><text x="8" y="28" font-family="Liberation Serif" font-weight="bold" font-size="17" text-anchor="middle" fill="#8e2323">Я</text><path d="M12 5.5H30.5L23.5 14V25.5L19.5 27.5V14Z" fill="#aeb6c2" stroke="#6e7785" stroke-width="0.9"/><path d="M14.5 6.8H28L22.6 13.5H20.2Z" fill="#d9dee6"/></svg>
<div class="t" style="left:664.00px;top:125.69px;font-size:11px;line-height:11px;color:#1e1e1e;letter-spacing:0.323px;">Сортировка</div>
<div class="t" style="left:666.00px;top:138.19px;font-size:11px;line-height:11px;color:#1e1e1e;letter-spacing:0.332px;">и фильтр</div>
<svg style="left:719px;top:141px" width="5" height="3" viewBox="0 0 5 3" shape-rendering="crispEdges"><path d="M0 0H5L2.5 3Z" fill="#555"/></svg>
<svg style="left:746px;top:89px" width="29" height="29" viewBox="0 0 29 29"><defs><linearGradient id="bn" x1="0" x2="1"><stop offset="0" stop-color="#2d62b0"/><stop offset="0.45" stop-color="#9cc2ee"/><stop offset="1" stop-color="#2d62b0"/></linearGradient></defs><rect x="5" y="1" width="6" height="5" rx="1.5" fill="url(#bn)" stroke="#234e92" stroke-width="0.6"/><rect x="18" y="1" width="6" height="5" rx="1.5" fill="url(#bn)" stroke="#234e92" stroke-width="0.6"/><rect x="3.5" y="5.5" width="9" height="8" rx="2" fill="url(#bn)" stroke="#234e92" stroke-width="0.6"/><rect x="16.5" y="5.5" width="9" height="8" rx="2" fill="url(#bn)" stroke="#234e92" stroke-width="0.6"/><rect x="11" y="8" width="7" height="6" fill="#3b72c0" stroke="#234e92" stroke-width="0.6"/><rect x="1" y="13" width="12.5" height="14" rx="2.5" fill="url(#bn)" stroke="#234e92" stroke-width="0.7"/><rect x="15.5" y="13" width="12.5" height="14" rx="2.5" fill="url(#bn)" stroke="#234e92" stroke-width="0.7"/><path d="M1.5 24.5H13M16 24.5H27.5" stroke="#1f4684" stroke-width="0.9"/></svg>
<div class="t" style="left:740.50px;top:125.69px;font-size:11px;line-height:11px;color:#1e1e1e;letter-spacing:0.229px;">Найти и</div>
<div class="t" style="left:733.50px;top:138.19px;font-size:11px;line-height:11px;color:#1e1e1e;letter-spacing:0.092px;">выделить</div>
<svg style="left:786px;top:141px" width="5" height="3" viewBox="0 0 5 3" shape-rendering="crispEdges"><path d="M0 0H5L2.5 3Z" fill="#555"/></svg>
<div class="t" style="left:667.00px;top:155.69px;font-size:11px;line-height:11px;color:#5f6c84;letter-spacing:0.272px;">Редактирование</div>
<div class="abs" style="left:797px;top:88px;width:1px;height:78px;background:linear-gradient(rgba(180,192,210,0),#c3ccd9 15%,#c3ccd9 85%,rgba(180,192,210,0));"></div>
<div class="abs" style="left:798px;top:88px;width:1px;height:78px;background:linear-gradient(rgba(255,255,255,0),#fff 15%,#fff 85%,rgba(255,255,255,0));"></div>
<!-- formula bar -->
<div class="abs" style="left:40px;top:170px;width:816px;height:29px;background:#dfe3ea;"></div>
<div class="abs" style="left:40px;top:173px;width:816px;height:1px;background:#9ca5b3;"></div>
<div class="abs" style="left:40px;top:174px;width:816px;height:20px;background:#ffffff;"></div>
<div class="abs" style="left:40px;top:194px;width:816px;height:1px;background:#8f98a6;"></div>
<div class="abs" style="left:40px;top:195px;width:816px;height:3px;background:#eaf0f8;"></div>
<div class="abs" style="left:40px;top:198px;width:816px;height:1px;background:#9ca5b3;"></div>
<div class="t" style="left:104.66px;top:178.84px;font-size:12px;line-height:12px;color:#111;">B4</div>
<svg style="left:188px;top:183px" width="7" height="4" viewBox="0 0 7 4"><path d="M0 0H7L3.5 4Z" fill="#111"/></svg>
<div class="abs" style="left:201px;top:174px;width:85px;height:20px;background:linear-gradient(#e4e9f0,#dbe1ea);border-radius:11px 0 0 11px;border-left:1px solid #a9b3c2"></div>
<div class="abs" style="left:285px;top:174px;width:1px;height:20px;background:#b9c2cf;"></div>
<svg style="left:206px;top:179px" width="9" height="9" viewBox="0 0 9 9"><defs><radialGradient id="kn" cx="0.4" cy="0.35" r="0.7"><stop offset="0" stop-color="#f6f7f9"/><stop offset="1" stop-color="#a9afb9"/></radialGradient></defs><circle cx="4.5" cy="4.5" r="4" fill="url(#kn)"/></svg>
<div class="t" style="left:268.33px;top:176.50px;font-size:13px;line-height:13px;color:#333;font-weight:bold;font-style:italic;font-family:'Liberation Serif',serif;">f</div>
<div class="t" style="left:273.80px;top:180.03px;font-size:10px;line-height:10px;color:#333;font-weight:bold;font-style:italic;font-family:'Liberation Serif',serif;">x</div>
<div class="t" style="left:294.60px;top:178.00px;font-size:13px;line-height:13px;color:#111;letter-spacing:0.335px;">Николаев А. Д.</div>
<div class="abs" style="left:840px;top:174px;width:16px;height:20px;background:#dfe3ea;border:1px solid #eef1f5;border-left:1px solid #b4becd"></div>
<svg style="left:844px;top:180px" width="9" height="7" viewBox="0 0 9 7"><path d="M1 1L4.5 5L8 1" fill="none" stroke="#4a4a4a" stroke-width="2"/></svg>
<!-- grid -->
<div class="abs" id="grid" style="left:40px;top:199px;width:800px;height:438px;overflow:hidden;background:#fff">
<div class="abs" style="left:0px;top:0px;width:800px;height:19px;background:#dfe4eb;"></div>
<div class="abs" style="left:0px;top:0px;width:26px;height:438px;background:#dfe4eb;"></div>
<div class="abs" style="left:0px;top:19px;width:800px;height:1px;background:#b1b8c4;"></div>
<div class="abs" style="left:25px;top:0px;width:1px;height:438px;background:#b1b8c4;"></div>
<div class="abs" style="left:90px;top:0px;width:108px;height:19px;background:linear-gradient(#fbd575,#fddc7a 50%,#fbcf5e);"></div>
<div class="abs" style="left:90px;top:19px;width:108px;height:1px;background:#e2a336;"></div>
<div class="abs" style="left:89px;top:0px;width:1px;height:19px;background:#e2a336;"></div>
<div class="abs" style="left:197px;top:0px;width:1px;height:19px;background:#e2a336;"></div>
<div class="t" style="left:53.49px;top:5.24px;font-size:12px;line-height:12px;color:#1c1c2a;">A</div>
<div class="t" style="left:139.49px;top:5.24px;font-size:12px;line-height:12px;color:#1c1c2a;">B</div>
<div class="abs" style="left:311px;top:0px;width:1px;height:19px;background:#a9b4c4;"></div>
<div class="t" style="left:250.16px;top:5.24px;font-size:12px;line-height:12px;color:#1c1c2a;">C</div>
<div class="abs" style="left:385px;top:0px;width:1px;height:19px;background:#a9b4c4;"></div>
<div class="t" style="left:344.16px;top:5.24px;font-size:12px;line-height:12px;color:#1c1c2a;">D</div>
<div class="abs" style="left:577px;top:0px;width:1px;height:19px;background:#a9b4c4;"></div>
<div class="t" style="left:477.49px;top:5.24px;font-size:12px;line-height:12px;color:#1c1c2a;">E</div>
<div class="abs" style="left:667px;top:0px;width:1px;height:19px;background:#a9b4c4;"></div>
<div class="t" style="left:618.83px;top:5.24px;font-size:12px;line-height:12px;color:#1c1c2a;">F</div>
<div class="abs" style="left:799px;top:0px;width:1px;height:19px;background:#a9b4c4;"></div>
<div class="t" style="left:771.83px;top:5.24px;font-size:12px;line-height:12px;color:#1c1c2a;">G</div>
<svg style="left:10px;top:5px" width="11" height="11" viewBox="0 0 11 11"><path d="M10.5 0.5V10.5H0.5Z" fill="#bcc2cc"/></svg>
<div class="abs" style="left:0px;top:39px;width:25px;height:1px;background:#b1b8c4;"></div>
<div class="t" style="left:9.16px;top:25.24px;font-size:12px;line-height:12px;color:#1c1c2a;">1</div>
<div class="abs" style="left:0px;top:59px;width:25px;height:1px;background:#b1b8c4;"></div>
<div class="t" style="left:9.16px;top:45.24px;font-size:12px;line-height:12px;color:#1c1c2a;">2</div>
<div class="abs" style="left:0px;top:79px;width:25px;height:1px;background:#e0a637;"></div>
<div class="t" style="left:9.16px;top:65.24px;font-size:12px;line-height:12px;color:#1c1c2a;">3</div>
<div class="abs" style="left:0px;top:80px;width:25px;height:19px;background:#ffd85e;"></div>
<div class="abs" style="left:0px;top:99px;width:25px;height:1px;background:#e0a637;"></div>
<div class="abs" style="left:25px;top:80px;width:1px;height:20px;background:#e0a637;"></div>
<div class="t" style="left:9.16px;top:85.24px;font-size:12px;line-height:12px;color:#1c1c2a;">4</div>
<div class="abs" style="left:0px;top:100px;width:25px;height:19px;background:#ffd85e;"></div>
<div class="abs" style="left:0px;top:119px;width:25px;height:1px;background:#e0a637;"></div>
<div class="abs" style="left:25px;top:100px;width:1px;height:20px;background:#e0a637;"></div>
<div class="t" style="left:9.16px;top:105.24px;font-size:12px;line-height:12px;color:#1c1c2a;">5</div>
<div class="abs" style="left:0px;top:120px;width:25px;height:19px;background:#ffd85e;"></div>
<div class="abs" style="left:0px;top:139px;width:25px;height:1px;background:#e0a637;"></div>
<div class="abs" style="left:25px;top:120px;width:1px;height:20px;background:#e0a637;"></div>
<div class="t" style="left:9.16px;top:125.24px;font-size:12px;line-height:12px;color:#1c1c2a;">6</div>
<div class="abs" style="left:0px;top:140px;width:25px;height:19px;background:#ffd85e;"></div>
<div class="abs" style="left:0px;top:159px;width:25px;height:1px;background:#e0a637;"></div>
<div class="abs" style="left:25px;top:140px;width:1px;height:20px;background:#e0a637;"></div>
<div class="t" style="left:9.16px;top:145.24px;font-size:12px;line-height:12px;color:#1c1c2a;">7</div>
<div class="abs" style="left:0px;top:160px;width:25px;height:19px;background:#ffd85e;"></div>
<div class="abs" style="left:0px;top:179px;width:25px;height:1px;background:#e0a637;"></div>
<div class="abs" style="left:25px;top:160px;width:1px;height:20px;background:#e0a637;"></div>
<div class="t" style="left:9.16px;top:165.24px;font-size:12px;line-height:12px;color:#1c1c2a;">8</div>
<div class="abs" style="left:0px;top:180px;width:25px;height:19px;background:#ffd85e;"></div>
<div class="abs" style="left:0px;top:199px;width:25px;height:1px;background:#e0a637;"></div>
<div class="abs" style="left:25px;top:180px;width:1px;height:20px;background:#e0a637;"></div>
<div class="t" style="left:9.16px;top:185.24px;font-size:12px;line-height:12px;color:#1c1c2a;">9</div>
<div class="abs" style="left:0px;top:200px;width:25px;height:19px;background:#ffd85e;"></div>
<div class="abs" style="left:0px;top:219px;width:25px;height:1px;background:#e0a637;"></div>
<div class="abs" style="left:25px;top:200px;width:1px;height:20px;background:#e0a637;"></div>
<div class="t" style="left:5.82px;top:205.24px;font-size:12px;line-height:12px;color:#1c1c2a;">10</div>
<div class="abs" style="left:0px;top:220px;width:25px;height:19px;background:#ffd85e;"></div>
<div class="abs" style="left:0px;top:239px;width:25px;height:1px;background:#e0a637;"></div>
<div class="abs" style="left:25px;top:220px;width:1px;height:20px;background:#e0a637;"></div>
<div class="t" style="left:6.27px;top:225.24px;font-size:12px;line-height:12px;color:#1c1c2a;">11</div>
<div class="abs" style="left:0px;top:240px;width:25px;height:19px;background:#ffd85e;"></div>
<div class="abs" style="left:0px;top:259px;width:25px;height:1px;background:#e0a637;"></div>
<div class="abs" style="left:25px;top:240px;width:1px;height:20px;background:#e0a637;"></div>
<div class="t" style="left:5.82px;top:245.24px;font-size:12px;line-height:12px;color:#1c1c2a;">12</div>
<div class="abs" style="left:0px;top:260px;width:25px;height:19px;background:#ffd85e;"></div>
<div class="abs" style="left:0px;top:279px;width:25px;height:1px;background:#e0a637;"></div>
<div class="abs" style="left:25px;top:260px;width:1px;height:20px;background:#e0a637;"></div>
<div class="t" style="left:5.82px;top:265.24px;font-size:12px;line-height:12px;color:#1c1c2a;">13</div>
<div class="abs" style="left:0px;top:280px;width:25px;height:19px;background:#ffd85e;"></div>
<div class="abs" style="left:0px;top:299px;width:25px;height:1px;background:#e0a637;"></div>
<div class="abs" style="left:25px;top:280px;width:1px;height:20px;background:#e0a637;"></div>
<div class="t" style="left:5.82px;top:285.24px;font-size:12px;line-height:12px;color:#1c1c2a;">14</div>
<div class="abs" style="left:0px;top:300px;width:25px;height:19px;background:#ffd85e;"></div>
<div class="abs" style="left:0px;top:319px;width:25px;height:1px;background:#e0a637;"></div>
<div class="abs" style="left:25px;top:300px;width:1px;height:20px;background:#e0a637;"></div>
<div class="t" style="left:5.82px;top:305.24px;font-size:12px;line-height:12px;color:#1c1c2a;">15</div>
<div class="abs" style="left:0px;top:320px;width:25px;height:19px;background:#ffd85e;"></div>
<div class="abs" style="left:0px;top:339px;width:25px;height:1px;background:#e0a637;"></div>
<div class="abs" style="left:25px;top:320px;width:1px;height:20px;background:#e0a637;"></div>
<div class="t" style="left:5.82px;top:325.24px;font-size:12px;line-height:12px;color:#1c1c2a;">16</div>
<div class="abs" style="left:0px;top:340px;width:25px;height:19px;background:#ffd85e;"></div>
<div class="abs" style="left:0px;top:359px;width:25px;height:1px;background:#e0a637;"></div>
<div class="abs" style="left:25px;top:340px;width:1px;height:20px;background:#e0a637;"></div>
<div class="t" style="left:5.82px;top:345.24px;font-size:12px;line-height:12px;color:#1c1c2a;">17</div>
<div class="abs" style="left:0px;top:360px;width:25px;height:19px;background:#ffd85e;"></div>
<div class="abs" style="left:0px;top:379px;width:25px;height:1px;background:#e0a637;"></div>
<div class="abs" style="left:25px;top:360px;width:1px;height:20px;background:#e0a637;"></div>
<div class="t" style="left:5.82px;top:365.24px;font-size:12px;line-height:12px;color:#1c1c2a;">18</div>
<div class="abs" style="left:0px;top:399px;width:25px;height:1px;background:#b1b8c4;"></div>
<div class="t" style="left:5.82px;top:385.24px;font-size:12px;line-height:12px;color:#1c1c2a;">19</div>
<div class="abs" style="left:0px;top:419px;width:25px;height:1px;background:#b1b8c4;"></div>
<div class="t" style="left:5.82px;top:405.24px;font-size:12px;line-height:12px;color:#1c1c2a;">20</div>
<div class="abs" style="left:0px;top:439px;width:25px;height:1px;background:#b1b8c4;"></div>
<div class="t" style="left:5.82px;top:425.24px;font-size:12px;line-height:12px;color:#1c1c2a;">21</div>
<div class="abs" style="left:26px;top:39px;width:774px;height:1px;background:#d4d8de;"></div>
<div class="abs" style="left:89px;top:20px;width:1px;height:39px;background:#d4d8de;"></div>
<div class="abs" style="left:197px;top:20px;width:1px;height:39px;background:#d4d8de;"></div>
<div class="abs" style="left:311px;top:20px;width:1px;height:39px;background:#d4d8de;"></div>
<div class="abs" style="left:385px;top:20px;width:1px;height:39px;background:#d4d8de;"></div>
<div class="abs" style="left:577px;top:20px;width:1px;height:39px;background:#d4d8de;"></div>
<div class="abs" style="left:667px;top:20px;width:1px;height:39px;background:#d4d8de;"></div>
<div class="abs" style="left:26px;top:60px;width:774px;height:19px;background:#60497b;"></div>
<div class="t" style="left:37.60px;top:63.50px;font-size:13px;line-height:13px;color:#fff;letter-spacing:0.516px;font-weight:bold;">№ п/п</div>
<div class="t" style="left:131.00px;top:63.50px;font-size:13px;line-height:13px;color:#fff;letter-spacing:-0.182px;font-weight:bold;">Имя</div>
<div class="t" style="left:206.80px;top:63.50px;font-size:13px;line-height:13px;color:#fff;letter-spacing:0.035px;font-weight:bold;">Дата рождения</div>
<div class="t" style="left:336.75px;top:63.50px;font-size:13px;line-height:13px;color:#fff;letter-spacing:-0.245px;font-weight:bold;">Пол</div>
<div class="t" style="left:413.95px;top:63.50px;font-size:13px;line-height:13px;color:#fff;letter-spacing:-0.132px;font-weight:bold;">Категория персонала</div>
<div class="t" style="left:608.00px;top:63.50px;font-size:13px;line-height:13px;color:#fff;letter-spacing:-0.023px;font-weight:bold;">Дата</div>
<div class="t" style="left:676.80px;top:63.50px;font-size:13px;line-height:13px;color:#fff;letter-spacing:0.010px;font-weight:bold;">Сумма заработной</div>
<div class="abs" style="left:26px;top:80px;width:63px;height:19px;background:#92d050;"></div>
<div class="abs" style="left:90px;top:80px;width:107px;height:19px;background:#92d050;"></div>
<div class="t" style="left:81.07px;top:83.50px;font-size:13px;line-height:13px;color:#000;">1</div>
<div class="t" style="left:92.70px;top:83.50px;font-size:13px;line-height:13px;color:#000;letter-spacing:0.335px;">Николаев А. Д.</div>
<div class="t" style="left:241.25px;top:83.50px;font-size:13px;line-height:13px;color:#000;letter-spacing:-0.355px;">1985</div>
<div class="t" style="left:333.95px;top:83.50px;font-size:13px;line-height:13px;color:#000;letter-spacing:0.363px;">муж.</div>
<div class="t" style="left:418.60px;top:83.50px;font-size:13px;line-height:13px;color:#000;letter-spacing:0.283px;">Основной персонал</div>
<div class="t" style="left:590.50px;top:83.50px;font-size:13px;line-height:13px;color:#000;letter-spacing:-0.008px;">03.01.2017</div>
<div class="t" style="left:757.80px;top:83.50px;font-size:13px;line-height:13px;color:#000;letter-spacing:-0.031px;">21556</div>
<div class="abs" style="left:26px;top:100px;width:63px;height:19px;background:#92d050;"></div>
<div class="abs" style="left:90px;top:100px;width:107px;height:19px;background:#6dbc8e;"></div>
<div class="t" style="left:81.07px;top:103.50px;font-size:13px;line-height:13px;color:#000;">2</div>
<div class="t" style="left:92.70px;top:103.50px;font-size:13px;line-height:13px;color:#000;letter-spacing:-0.119px;">Сафронова В. М.</div>
<div class="t" style="left:241.25px;top:103.50px;font-size:13px;line-height:13px;color:#000;letter-spacing:-0.355px;">1973</div>
<div class="t" style="left:333.95px;top:103.50px;font-size:13px;line-height:13px;color:#000;letter-spacing:0.695px;">жен.</div>
<div class="t" style="left:418.60px;top:103.50px;font-size:13px;line-height:13px;color:#000;letter-spacing:0.283px;">Основной персонал</div>
<div class="t" style="left:590.50px;top:103.50px;font-size:13px;line-height:13px;color:#000;letter-spacing:-0.008px;">03.01.2017</div>
<div class="t" style="left:757.80px;top:103.50px;font-size:13px;line-height:13px;color:#000;letter-spacing:-0.031px;">18546</div>
<div class="abs" style="left:26px;top:120px;width:63px;height:19px;background:#92d050;"></div>
<div class="abs" style="left:90px;top:120px;width:107px;height:19px;background:#6dbc8e;"></div>
<div class="t" style="left:81.07px;top:123.50px;font-size:13px;line-height:13px;color:#000;">3</div>
<div class="t" style="left:92.70px;top:123.50px;font-size:13px;line-height:13px;color:#000;letter-spacing:0.001px;">Коваль Л. П.</div>
<div class="t" style="left:241.25px;top:123.50px;font-size:13px;line-height:13px;color:#000;letter-spacing:-0.355px;">1978</div>
<div class="t" style="left:333.95px;top:123.50px;font-size:13px;line-height:13px;color:#000;letter-spacing:0.695px;">жен.</div>
<div class="t" style="left:392.30px;top:123.50px;font-size:13px;line-height:13px;color:#000;letter-spacing:0.385px;">Вспомогательный персонал</div>
<div class="t" style="left:590.50px;top:123.50px;font-size:13px;line-height:13px;color:#000;letter-spacing:-0.008px;">03.01.2017</div>
<div class="t" style="left:757.80px;top:123.50px;font-size:13px;line-height:13px;color:#000;letter-spacing:-0.031px;">10546</div>
<div class="abs" style="left:26px;top:140px;width:63px;height:19px;background:#92d050;"></div>
<div class="abs" style="left:90px;top:140px;width:107px;height:19px;background:#6dbc8e;"></div>
<div class="t" style="left:81.07px;top:143.50px;font-size:13px;line-height:13px;color:#000;">4</div>
<div class="t" style="left:92.70px;top:143.50px;font-size:13px;line-height:13px;color:#000;letter-spacing:0.022px;">Парфенов Д. Ф.</div>
<div class="t" style="left:241.25px;top:143.50px;font-size:13px;line-height:13px;color:#000;letter-spacing:-0.355px;">1969</div>
<div class="t" style="left:333.95px;top:143.50px;font-size:13px;line-height:13px;color:#000;letter-spacing:0.363px;">муж.</div>
<div class="t" style="left:418.60px;top:143.50px;font-size:13px;line-height:13px;color:#000;letter-spacing:0.283px;">Основной персонал</div>
<div class="t" style="left:590.50px;top:143.50px;font-size:13px;line-height:13px;color:#000;letter-spacing:-0.008px;">03.01.2017</div>
<div class="t" style="left:757.80px;top:143.50px;font-size:13px;line-height:13px;color:#000;letter-spacing:-0.031px;">35254</div>
<div class="abs" style="left:26px;top:160px;width:63px;height:19px;background:#92d050;"></div>
<div class="abs" style="left:90px;top:160px;width:107px;height:19px;background:#6dbc8e;"></div>
<div class="t" style="left:81.07px;top:163.50px;font-size:13px;line-height:13px;color:#000;">5</div>
<div class="t" style="left:92.70px;top:163.50px;font-size:13px;line-height:13px;color:#000;letter-spacing:0.081px;">Петров Ф. Л.</div>
<div class="t" style="left:241.25px;top:163.50px;font-size:13px;line-height:13px;color:#000;letter-spacing:-0.355px;">1987</div>
<div class="t" style="left:333.95px;top:163.50px;font-size:13px;line-height:13px;color:#000;letter-spacing:0.363px;">муж.</div>
<div class="t" style="left:418.60px;top:163.50px;font-size:13px;line-height:13px;color:#000;letter-spacing:0.283px;">Основной персонал</div>
<div class="t" style="left:590.50px;top:163.50px;font-size:13px;line-height:13px;color:#000;letter-spacing:-0.008px;">03.01.2017</div>
<div class="t" style="left:757.80px;top:163.50px;font-size:13px;line-height:13px;color:#000;letter-spacing:0.163px;">11456</div>
<div class="abs" style="left:26px;top:180px;width:63px;height:19px;background:#92d050;"></div>
<div class="abs" style="left:90px;top:180px;width:107px;height:19px;background:#6dbc8e;"></div>
<div class="t" style="left:81.07px;top:183.50px;font-size:13px;line-height:13px;color:#000;">6</div>
<div class="t" style="left:92.70px;top:183.50px;font-size:13px;line-height:13px;color:#000;letter-spacing:0.215px;">Попова М. Д.</div>
<div class="t" style="left:241.25px;top:183.50px;font-size:13px;line-height:13px;color:#000;letter-spacing:-0.355px;">1981</div>
<div class="t" style="left:333.95px;top:183.50px;font-size:13px;line-height:13px;color:#000;letter-spacing:0.695px;">жен.</div>
<div class="t" style="left:392.30px;top:183.50px;font-size:13px;line-height:13px;color:#000;letter-spacing:0.385px;">Вспомогательный персонал</div>
<div class="t" style="left:590.50px;top:183.50px;font-size:13px;line-height:13px;color:#000;letter-spacing:-0.008px;">03.01.2017</div>
<div class="t" style="left:761.00px;top:183.50px;font-size:13px;line-height:13px;color:#000;letter-spacing:-0.030px;">9564</div>
<div class="abs" style="left:26px;top:200px;width:63px;height:19px;background:#92d050;"></div>
<div class="abs" style="left:90px;top:200px;width:107px;height:19px;background:#6dbc8e;"></div>
<div class="t" style="left:81.07px;top:203.50px;font-size:13px;line-height:13px;color:#000;">7</div>
<div class="t" style="left:92.70px;top:203.50px;font-size:13px;line-height:13px;color:#000;letter-spacing:0.335px;">Николаев А. Д.</div>
<div class="t" style="left:241.25px;top:203.50px;font-size:13px;line-height:13px;color:#000;letter-spacing:-0.355px;">1985</div>
<div class="t" style="left:333.95px;top:203.50px;font-size:13px;line-height:13px;color:#000;letter-spacing:0.363px;">муж.</div>
<div class="t" style="left:418.60px;top:203.50px;font-size:13px;line-height:13px;color:#000;letter-spacing:0.283px;">Основной персонал</div>
<div class="t" style="left:590.50px;top:203.50px;font-size:13px;line-height:13px;color:#000;letter-spacing:-0.008px;">04.01.2017</div>
<div class="t" style="left:757.80px;top:203.50px;font-size:13px;line-height:13px;color:#000;letter-spacing:-0.031px;">23754</div>
<div class="abs" style="left:26px;top:220px;width:63px;height:19px;background:#92d050;"></div>
<div class="abs" style="left:90px;top:220px;width:107px;height:19px;background:#6dbc8e;"></div>
<div class="t" style="left:81.07px;top:223.50px;font-size:13px;line-height:13px;color:#000;">8</div>
<div class="t" style="left:92.70px;top:223.50px;font-size:13px;line-height:13px;color:#000;letter-spacing:-0.119px;">Сафронова В. М.</div>
<div class="t" style="left:241.25px;top:223.50px;font-size:13px;line-height:13px;color:#000;letter-spacing:-0.355px;">1973</div>
<div class="t" style="left:333.95px;top:223.50px;font-size:13px;line-height:13px;color:#000;letter-spacing:0.695px;">жен.</div>
<div class="t" style="left:418.60px;top:223.50px;font-size:13px;line-height:13px;color:#000;letter-spacing:0.283px;">Основной персонал</div>
<div class="t" style="left:590.50px;top:223.50px;font-size:13px;line-height:13px;color:#000;letter-spacing:-0.008px;">05.01.2017</div>
<div class="t" style="left:757.80px;top:223.50px;font-size:13px;line-height:13px;color:#000;letter-spacing:-0.031px;">18546</div>
<div class="abs" style="left:26px;top:240px;width:63px;height:19px;background:#92d050;"></div>
<div class="abs" style="left:90px;top:240px;width:107px;height:19px;background:#6dbc8e;"></div>
<div class="t" style="left:81.07px;top:243.50px;font-size:13px;line-height:13px;color:#000;">9</div>
<div class="t" style="left:92.70px;top:243.50px;font-size:13px;line-height:13px;color:#000;letter-spacing:0.001px;">Коваль Л. П.</div>
<div class="t" style="left:241.25px;top:243.50px;font-size:13px;line-height:13px;color:#000;letter-spacing:-0.355px;">1978</div>
<div class="t" style="left:333.95px;top:243.50px;font-size:13px;line-height:13px;color:#000;letter-spacing:0.695px;">жен.</div>
<div class="t" style="left:392.30px;top:243.50px;font-size:13px;line-height:13px;color:#000;letter-spacing:0.385px;">Вспомогательный персонал</div>
<div class="t" style="left:590.50px;top:243.50px;font-size:13px;line-height:13px;color:#000;letter-spacing:-0.008px;">06.01.2017</div>
<div class="t" style="left:757.80px;top:243.50px;font-size:13px;line-height:13px;color:#000;letter-spacing:-0.031px;">12821</div>
<div class="abs" style="left:26px;top:260px;width:63px;height:19px;background:#92d050;"></div>
<div class="abs" style="left:90px;top:260px;width:107px;height:19px;background:#6dbc8e;"></div>
<div class="t" style="left:73.83px;top:263.50px;font-size:13px;line-height:13px;color:#000;">10</div>
<div class="t" style="left:92.70px;top:263.50px;font-size:13px;line-height:13px;color:#000;letter-spacing:0.022px;">Парфенов Д. Ф.</div>
<div class="t" style="left:241.25px;top:263.50px;font-size:13px;line-height:13px;color:#000;letter-spacing:-0.355px;">1969</div>
<div class="t" style="left:333.95px;top:263.50px;font-size:13px;line-height:13px;color:#000;letter-spacing:0.363px;">муж.</div>
<div class="t" style="left:418.60px;top:263.50px;font-size:13px;line-height:13px;color:#000;letter-spacing:0.283px;">Основной персонал</div>
<div class="t" style="left:590.50px;top:263.50px;font-size:13px;line-height:13px;color:#000;letter-spacing:-0.008px;">07.01.2017</div>
<div class="t" style="left:757.80px;top:263.50px;font-size:13px;line-height:13px;color:#000;letter-spacing:-0.031px;">35254</div>
<div class="abs" style="left:26px;top:280px;width:63px;height:19px;background:#92d050;"></div>
<div class="abs" style="left:90px;top:280px;width:107px;height:19px;background:#6dbc8e;"></div>
<div class="t" style="left:74.80px;top:283.50px;font-size:13px;line-height:13px;color:#000;">11</div>
<div class="t" style="left:92.70px;top:283.50px;font-size:13px;line-height:13px;color:#000;letter-spacing:0.081px;">Петров Ф. Л.</div>
<div class="t" style="left:241.25px;top:283.50px;font-size:13px;line-height:13px;color:#000;letter-spacing:-0.355px;">1987</div>
<div class="t" style="left:333.95px;top:283.50px;font-size:13px;line-height:13px;color:#000;letter-spacing:0.363px;">муж.</div>
<div class="t" style="left:418.60px;top:283.50px;font-size:13px;line-height:13px;color:#000;letter-spacing:0.283px;">Основной персонал</div>
<div class="t" style="left:590.50px;top:283.50px;font-size:13px;line-height:13px;color:#000;letter-spacing:-0.008px;">08.01.2017</div>
<div class="t" style="left:757.80px;top:283.50px;font-size:13px;line-height:13px;color:#000;letter-spacing:0.163px;">11698</div>
<div class="abs" style="left:26px;top:300px;width:63px;height:19px;background:#92d050;"></div>
<div class="abs" style="left:90px;top:300px;width:107px;height:19px;background:#6dbc8e;"></div>
<div class="t" style="left:73.83px;top:303.50px;font-size:13px;line-height:13px;color:#000;">12</div>
<div class="t" style="left:92.70px;top:303.50px;font-size:13px;line-height:13px;color:#000;letter-spacing:0.215px;">Попова М. Д.</div>
<div class="t" style="left:241.25px;top:303.50px;font-size:13px;line-height:13px;color:#000;letter-spacing:-0.355px;">1981</div>
<div class="t" style="left:333.95px;top:303.50px;font-size:13px;line-height:13px;color:#000;letter-spacing:0.695px;">жен.</div>
<div class="t" style="left:392.30px;top:303.50px;font-size:13px;line-height:13px;color:#000;letter-spacing:0.385px;">Вспомогательный персонал</div>
<div class="t" style="left:590.50px;top:303.50px;font-size:13px;line-height:13px;color:#000;letter-spacing:-0.008px;">09.01.2017</div>
<div class="t" style="left:761.00px;top:303.50px;font-size:13px;line-height:13px;color:#000;letter-spacing:-0.030px;">9800</div>
<div class="abs" style="left:26px;top:320px;width:63px;height:19px;background:#92d050;"></div>
<div class="abs" style="left:90px;top:320px;width:107px;height:19px;background:#6dbc8e;"></div>
<div class="t" style="left:73.83px;top:323.50px;font-size:13px;line-height:13px;color:#000;">13</div>
<div class="t" style="left:92.70px;top:323.50px;font-size:13px;line-height:13px;color:#000;letter-spacing:0.335px;">Николаев А. Д.</div>
<div class="t" style="left:241.25px;top:323.50px;font-size:13px;line-height:13px;color:#000;letter-spacing:-0.355px;">1985</div>
<div class="t" style="left:333.95px;top:323.50px;font-size:13px;line-height:13px;color:#000;letter-spacing:0.363px;">муж.</div>
<div class="t" style="left:418.60px;top:323.50px;font-size:13px;line-height:13px;color:#000;letter-spacing:0.283px;">Основной персонал</div>
<div class="t" style="left:590.50px;top:323.50px;font-size:13px;line-height:13px;color:#000;letter-spacing:-0.008px;">10.01.2017</div>
<div class="t" style="left:757.80px;top:323.50px;font-size:13px;line-height:13px;color:#000;letter-spacing:-0.031px;">23754</div>
<div class="abs" style="left:26px;top:340px;width:63px;height:19px;background:#92d050;"></div>
<div class="abs" style="left:90px;top:340px;width:107px;height:19px;background:#6dbc8e;"></div>
<div class="t" style="left:73.83px;top:343.50px;font-size:13px;line-height:13px;color:#000;">14</div>
<div class="t" style="left:92.70px;top:343.50px;font-size:13px;line-height:13px;color:#000;letter-spacing:-0.119px;">Сафронова В. М.</div>
<div class="t" style="left:241.25px;top:343.50px;font-size:13px;line-height:13px;color:#000;letter-spacing:-0.355px;">1973</div>
<div class="t" style="left:333.95px;top:343.50px;font-size:13px;line-height:13px;color:#000;letter-spacing:0.695px;">жен.</div>
<div class="t" style="left:418.60px;top:343.50px;font-size:13px;line-height:13px;color:#000;letter-spacing:0.283px;">Основной персонал</div>
<div class="t" style="left:590.50px;top:343.50px;font-size:13px;line-height:13px;color:#000;letter-spacing:0.089px;">11.01.2017</div>
<div class="t" style="left:757.80px;top:343.50px;font-size:13px;line-height:13px;color:#000;letter-spacing:0.163px;">17115</div>
<div class="abs" style="left:26px;top:360px;width:63px;height:19px;background:#92d050;"></div>
<div class="abs" style="left:90px;top:360px;width:107px;height:19px;background:#6dbc8e;"></div>
<div class="t" style="left:73.83px;top:363.50px;font-size:13px;line-height:13px;color:#000;">15</div>
<div class="t" style="left:92.70px;top:363.50px;font-size:13px;line-height:13px;color:#000;letter-spacing:0.001px;">Коваль Л. П.</div>
<div class="t" style="left:241.25px;top:363.50px;font-size:13px;line-height:13px;color:#000;letter-spacing:-0.355px;">1978</div>
<div class="t" style="left:333.95px;top:363.50px;font-size:13px;line-height:13px;color:#000;letter-spacing:0.695px;">жен.</div>
<div class="t" style="left:392.30px;top:363.50px;font-size:13px;line-height:13px;color:#000;letter-spacing:0.385px;">Вспомогательный персонал</div>
<div class="t" style="left:590.50px;top:363.50px;font-size:13px;line-height:13px;color:#000;letter-spacing:-0.008px;">12.01.2017</div>
<div class="t" style="left:757.80px;top:363.50px;font-size:13px;line-height:13px;color:#000;letter-spacing:0.163px;">11456</div>
<div class="abs" style="left:26px;top:380px;width:63px;height:19px;background:#92d050;"></div>
<div class="abs" style="left:90px;top:380px;width:107px;height:19px;background:#92d050;"></div>
<div class="t" style="left:73.83px;top:383.50px;font-size:13px;line-height:13px;color:#000;">16</div>
<div class="t" style="left:92.70px;top:383.50px;font-size:13px;line-height:13px;color:#000;letter-spacing:0.022px;">Парфенов Д. Ф.</div>
<div class="t" style="left:241.25px;top:383.50px;font-size:13px;line-height:13px;color:#000;letter-spacing:-0.355px;">1969</div>
<div class="t" style="left:333.95px;top:383.50px;font-size:13px;line-height:13px;color:#000;letter-spacing:0.363px;">муж.</div>
<div class="t" style="left:418.60px;top:383.50px;font-size:13px;line-height:13px;color:#000;letter-spacing:0.283px;">Основной персонал</div>
<div class="t" style="left:590.50px;top:383.50px;font-size:13px;line-height:13px;color:#000;letter-spacing:-0.008px;">13.01.2017</div>
<div class="t" style="left:757.80px;top:383.50px;font-size:13px;line-height:13px;color:#000;letter-spacing:-0.031px;">35254</div>
<div class="abs" style="left:26px;top:400px;width:63px;height:19px;background:#92d050;"></div>
<div class="abs" style="left:90px;top:400px;width:107px;height:19px;background:#92d050;"></div>
<div class="t" style="left:73.83px;top:403.50px;font-size:13px;line-height:13px;color:#000;">17</div>
<div class="t" style="left:92.70px;top:403.50px;font-size:13px;line-height:13px;color:#000;letter-spacing:0.081px;">Петров Ф. Л.</div>
<div class="t" style="left:241.25px;top:403.50px;font-size:13px;line-height:13px;color:#000;letter-spacing:-0.355px;">1987</div>
<div class="t" style="left:333.95px;top:403.50px;font-size:13px;line-height:13px;color:#000;letter-spacing:0.363px;">муж.</div>
<div class="t" style="left:418.60px;top:403.50px;font-size:13px;line-height:13px;color:#000;letter-spacing:0.283px;">Основной персонал</div>
<div class="t" style="left:590.50px;top:403.50px;font-size:13px;line-height:13px;color:#000;letter-spacing:-0.008px;">14.01.2017</div>
<div class="t" style="left:757.80px;top:403.50px;font-size:13px;line-height:13px;color:#000;letter-spacing:-0.031px;">12102</div>
<div class="abs" style="left:26px;top:420px;width:63px;height:19px;background:#92d050;"></div>
<div class="abs" style="left:90px;top:420px;width:107px;height:19px;background:#92d050;"></div>
<div class="t" style="left:73.83px;top:423.50px;font-size:13px;line-height:13px;color:#000;">18</div>
<div class="t" style="left:92.70px;top:423.50px;font-size:13px;line-height:13px;color:#000;letter-spacing:0.215px;">Попова М. Д.</div>
<div class="t" style="left:241.25px;top:423.50px;font-size:13px;line-height:13px;color:#000;letter-spacing:-0.355px;">1981</div>
<div class="t" style="left:333.95px;top:423.50px;font-size:13px;line-height:13px;color:#000;letter-spacing:0.695px;">жен.</div>
<div class="t" style="left:392.30px;top:423.50px;font-size:13px;line-height:13px;color:#000;letter-spacing:0.385px;">Вспомогательный персонал</div>
<div class="t" style="left:590.50px;top:423.50px;font-size:13px;line-height:13px;color:#000;letter-spacing:-0.008px;">15.01.2017</div>
<div class="t" style="left:761.00px;top:423.50px;font-size:13px;line-height:13px;color:#000;letter-spacing:-0.030px;">9800</div>
<div class="abs" style="left:26px;top:59px;width:774px;height:1px;background:#000;"></div>
<div class="abs" style="left:26px;top:79px;width:774px;height:1px;background:#000;"></div>
<div class="abs" style="left:26px;top:99px;width:774px;height:1px;background:#000;"></div>
<div class="abs" style="left:26px;top:119px;width:774px;height:1px;background:#000;"></div>
<div class="abs" style="left:26px;top:139px;width:774px;height:1px;background:#000;"></div>
<div class="abs" style="left:26px;top:159px;width:774px;height:1px;background:#000;"></div>
<div class="abs" style="left:26px;top:179px;width:774px;height:1px;background:#000;"></div>
<div class="abs" style="left:26px;top:199px;width:774px;height:1px;background:#000;"></div>
<div class="abs" style="left:26px;top:219px;width:774px;height:1px;background:#000;"></div>
<div class="abs" style="left:26px;top:239px;width:774px;height:1px;background:#000;"></div>
<div class="abs" style="left:26px;top:259px;width:774px;height:1px;background:#000;"></div>
<div class="abs" style="left:26px;top:279px;width:774px;height:1px;background:#000;"></div>
<div class="abs" style="left:26px;top:299px;width:774px;height:1px;background:#000;"></div>
<div class="abs" style="left:26px;top:319px;width:774px;height:1px;background:#000;"></div>
<div class="abs" style="left:26px;top:339px;width:774px;height:1px;background:#000;"></div>
<div class="abs" style="left:26px;top:359px;width:774px;height:1px;background:#000;"></div>
<div class="abs" style="left:26px;top:379px;width:774px;height:1px;background:#000;"></div>
<div class="abs" style="left:26px;top:399px;width:774px;height:1px;background:#000;"></div>
<div class="abs" style="left:26px;top:419px;width:774px;height:1px;background:#000;"></div>
<div class="abs" style="left:26px;top:439px;width:774px;height:1px;background:#000;"></div>
<div class="abs" style="left:89px;top:59px;width:1px;height:380px;background:#000;"></div>
<div class="abs" style="left:197px;top:59px;width:1px;height:380px;background:#000;"></div>
<div class="abs" style="left:311px;top:59px;width:1px;height:380px;background:#000;"></div>
<div class="abs" style="left:385px;top:59px;width:1px;height:380px;background:#000;"></div>
<div class="abs" style="left:577px;top:59px;width:1px;height:380px;background:#000;"></div>
<div class="abs" style="left:667px;top:59px;width:1px;height:380px;background:#000;"></div>
<div class="abs" style="left:90px;top:99px;width:107px;height:1px;background:#1c4a6b;"></div>
<div class="abs" style="left:90px;top:119px;width:107px;height:1px;background:#1c4a6b;"></div>
<div class="abs" style="left:90px;top:139px;width:107px;height:1px;background:#1c4a6b;"></div>
<div class="abs" style="left:90px;top:159px;width:107px;height:1px;background:#1c4a6b;"></div>
<div class="abs" style="left:90px;top:179px;width:107px;height:1px;background:#1c4a6b;"></div>
<div class="abs" style="left:90px;top:199px;width:107px;height:1px;background:#1c4a6b;"></div>
<div class="abs" style="left:90px;top:219px;width:107px;height:1px;background:#1c4a6b;"></div>
<div class="abs" style="left:90px;top:239px;width:107px;height:1px;background:#1c4a6b;"></div>
<div class="abs" style="left:90px;top:259px;width:107px;height:1px;background:#1c4a6b;"></div>
<div class="abs" style="left:90px;top:279px;width:107px;height:1px;background:#1c4a6b;"></div>
<div class="abs" style="left:90px;top:299px;width:107px;height:1px;background:#1c4a6b;"></div>
<div class="abs" style="left:90px;top:319px;width:107px;height:1px;background:#1c4a6b;"></div>
<div class="abs" style="left:90px;top:339px;width:107px;height:1px;background:#1c4a6b;"></div>
<div class="abs" style="left:90px;top:359px;width:107px;height:1px;background:#1c4a6b;"></div>
<div class="abs" style="left:88px;top:78px;width:1px;height:303px;background:#6d2faf;"></div>
<div class="abs" style="left:89px;top:78px;width:1px;height:303px;background:#fff;"></div>
<div class="abs" style="left:90px;top:78px;width:1px;height:303px;background:#6d2faf;"></div>
<div class="abs" style="left:196px;top:78px;width:1px;height:303px;background:#6d2faf;"></div>
<div class="abs" style="left:197px;top:78px;width:1px;height:303px;background:#fff;"></div>
<div class="abs" style="left:198px;top:78px;width:1px;height:303px;background:#000;"></div>
<div class="abs" style="left:88px;top:78px;width:111px;height:1px;background:#9fb684;"></div>
<div class="abs" style="left:88px;top:79px;width:111px;height:1px;background:#fff;"></div>
<div class="abs" style="left:91px;top:80px;width:105px;height:1px;background:#6d2faf;"></div>
<div class="abs" style="left:91px;top:378px;width:105px;height:1px;background:#6d2faf;"></div>
<div class="abs" style="left:88px;top:379px;width:111px;height:1px;background:#fff;"></div>
<div class="abs" style="left:88px;top:380px;width:111px;height:1px;background:#6d2faf;"></div>
<div class="abs" style="left:195px;top:377px;width:5px;height:5px;background:#000;border:1px solid #fff"></div>
</div>
<svg style="left:100px;top:255px" width="170" height="345" viewBox="100 255 170 345"><defs><filter id="rsh" x="-20%" y="-20%" width="140%" height="140%"><feGaussianBlur in="SourceAlpha" stdDeviation="2"/><feOffset dx="2.4" dy="2.4"/><feComponentTransfer><feFuncA type="linear" slope="0.6"/></feComponentTransfer><feMerge><feMergeNode/><feMergeNode in="SourceGraphic"/></feMerge></filter></defs><rect x="119.8" y="271.7" width="129.7" height="309.6" rx="11" ry="11" fill="none" stroke="#fe0000" stroke-width="5.5" filter="url(#rsh)"/></svg>
<svg style="left:383px;top:556px" width="19" height="19" viewBox="383 556 19 19"><defs><filter id="csh" x="-30%" y="-30%" width="160%" height="160%"><feGaussianBlur in="SourceAlpha" stdDeviation="0.9"/><feOffset dx="0.5" dy="0.8"/><feComponentTransfer><feFuncA type="linear" slope="0.6"/></feComponentTransfer><feMerge><feMergeNode/><feMergeNode in="SourceGraphic"/></feMerge></filter></defs><path d="M390 559.5H395V563H398.8V568H395V571.5H390V568H386.2V563H390Z" fill="#fff" stroke="#000" stroke-width="1.6" filter="url(#csh)"/></svg>
<div class="abs" style="left:840px;top:199px;width:16px;height:438px;background:#e3e7ee;"></div>
<div class="abs" style="left:840px;top:199px;width:1px;height:438px;background:#c9d0db;"></div>
<div class="abs" style="left:841px;top:200px;width:14px;height:7px;background:#fff;border:1px solid #8893a5"></div>
<div class="abs" style="left:844px;top:203px;width:8px;height:1px;background:#6c7688;"></div>
<svg style="left:843px;top:212px" width="9" height="6" viewBox="0 0 9 6"><path d="M0 5.5H9L4.5 0.5Z" fill="#4a4d44"/></svg>
<div class="abs" style="left:840px;top:224px;width:15px;height:180px;background:linear-gradient(90deg,#eef2f8,#f6f8fb 40%,#dfe4ec);border:1px solid #8a95a6;border-radius:2px"></div>
<div class="abs" style="left:844px;top:310px;width:8px;height:1px;background:#7b8493;"></div>
<div class="abs" style="left:844px;top:312px;width:8px;height:1px;background:#7b8493;"></div>
<div class="abs" style="left:844px;top:314px;width:8px;height:1px;background:#7b8493;"></div>
<div class="abs" style="left:844px;top:316px;width:8px;height:1px;background:#7b8493;"></div>
<svg style="left:843px;top:625px" width="9" height="6" viewBox="0 0 9 6"><path d="M0 0.5H9L4.5 5.5Z" fill="#4a4d44"/></svg>
<!-- sheet tab bar -->
<div class="abs" style="left:40px;top:637px;width:816px;height:17px;background:#dfe4ec;"></div>
<div class="abs" style="left:40px;top:637px;width:816px;height:1px;background:#aab4c3;"></div>
<div class="abs" style="left:40px;top:653px;width:816px;height:1px;background:#8f99a9;"></div>
<svg width="0" height="0"><defs><linearGradient id="tbg" x1="0" x2="0" y1="0" y2="1"><stop offset="0" stop-color="#f4f6fa"/><stop offset="1" stop-color="#d5dbe5"/></linearGradient></defs></svg>
<div class="abs" style="left:46px;top:641px;width:1px;height:7px;background:#4a4f57;"></div>
<svg style="left:48px;top:641px" width="4" height="7" viewBox="0 0 4 7"><path d="M4 0L0 3.5L4 7Z" fill="#4a4f57"/></svg>
<svg style="left:62px;top:641px" width="4" height="7" viewBox="0 0 4 7"><path d="M4 0L0 3.5L4 7Z" fill="#4a4f57"/></svg>
<svg style="left:76.5px;top:641px" width="4" height="7" viewBox="0 0 4 7"><path d="M0 0L4 3.5L0 7Z" fill="#4a4f57"/></svg>
<svg style="left:90px;top:641px" width="4" height="7" viewBox="0 0 4 7"><path d="M0 0L4 3.5L0 7Z" fill="#4a4f57"/></svg>
<div class="abs" style="left:95px;top:641px;width:1px;height:7px;background:#4a4f57;"></div>
<div class="abs" style="left:101px;top:638px;width:1px;height:15px;background:#9aa5b5;"></div>
<div class="abs" style="left:40px;top:637px;width:481px;height:17px;overflow:hidden">
<svg style="left:0;top:0" width="481" height="17" viewBox="40 637 481 17"><rect x="102" y="638" width="420" height="15" fill="url(#tbg)"/><path d="M434.5 637.5 L434.5 650 Q434.5 652.5 437 653 L486 653.5 L497.5 638 Z" fill="#fff"/><path d="M434.5 638 L434.5 650 Q434.5 652.5 437 653" fill="none" stroke="#7f8998" stroke-width="1"/><path d="M105 653.5 L117 638" fill="none" stroke="#7f8998" stroke-width="1"/><path d="M105.5 653.5 L108.5 649.5 L111.5 653.5 Z" fill="#fff"/><path d="M162.5 653.5 L174 638" fill="none" stroke="#7f8998" stroke-width="1"/><path d="M163 653.5 L166 649.5 L169 653.5 Z" fill="#fff"/><path d="M215.5 653.5 L227.5 638" fill="none" stroke="#7f8998" stroke-width="1"/><path d="M216 653.5 L219 649.5 L222 653.5 Z" fill="#fff"/><path d="M276.5 653.5 L288 638" fill="none" stroke="#7f8998" stroke-width="1"/><path d="M277 653.5 L280 649.5 L283 653.5 Z" fill="#fff"/><path d="M337 653.5 L350 638" fill="none" stroke="#7f8998" stroke-width="1"/><path d="M337.5 653.5 L340.5 649.5 L343.5 653.5 Z" fill="#fff"/><path d="M485.5 653.5 L497.5 638" fill="none" stroke="#7f8998" stroke-width="1"/><path d="M486 653.5 L489 649.5 L492 653.5 Z" fill="#fff"/><path d="M102 637.5 H434 M498 637.5 H522" stroke="#a3adbc" stroke-width="1"/></svg>
<div class="t" style="left:83.00px;top:2.14px;font-size:12px;line-height:12px;color:#3d4655;letter-spacing:0.210px;">Лист8</div>
<div class="t" style="left:136.00px;top:2.14px;font-size:12px;line-height:12px;color:#3d4655;letter-spacing:0.210px;">Лист9</div>
<div class="t" style="left:190.50px;top:2.14px;font-size:12px;line-height:12px;color:#3d4655;letter-spacing:0.096px;">Лист10</div>
<div class="t" style="left:250.80px;top:2.14px;font-size:12px;line-height:12px;color:#3d4655;letter-spacing:0.328px;">Лист11</div>
<div class="t" style="left:314.70px;top:2.14px;font-size:12px;line-height:12px;color:#3d4655;letter-spacing:-0.188px;">Диаграмма1</div>
<div class="t" style="left:459.40px;top:2.14px;font-size:12px;line-height:12px;color:#3d4655;letter-spacing:0.250px;">Лист2</div>
<div class="t" style="left:404.40px;top:2.14px;font-size:12px;line-height:12px;color:#2b2b33;letter-spacing:0.194px;font-weight:bold;">Лист1</div>
</div>
<div class="abs" style="left:522px;top:639px;width:6px;height:13px;background:#fff;border:1px solid #8691a3"></div>
<div class="abs" style="left:524px;top:642px;width:1px;height:7px;background:#6f7a8c;"></div>
<div class="abs" style="left:528px;top:638px;width:312px;height:15px;background:#e6eaf0;"></div>
<svg style="left:533.5px;top:641px" width="5" height="8" viewBox="0 0 5 8"><path d="M5 0L0 4L5 8Z" fill="#3f4650"/></svg>
<div class="abs" style="left:545px;top:638px;width:172px;height:15px;background:linear-gradient(#f7f9fc,#eef1f6 45%,#dfe4ec);border:1px solid #8a95a6;border-radius:2px"></div>
<div class="abs" style="left:627px;top:642px;width:1px;height:7px;background:#7b8493;"></div>
<div class="abs" style="left:629px;top:642px;width:1px;height:7px;background:#7b8493;"></div>
<div class="abs" style="left:631px;top:642px;width:1px;height:7px;background:#7b8493;"></div>
<div class="abs" style="left:633px;top:642px;width:1px;height:7px;background:#7b8493;"></div>
<svg style="left:821.5px;top:641px" width="5" height="8" viewBox="0 0 5 8"><path d="M0 0L5 4L0 8Z" fill="#3f4650"/></svg>
<div class="abs" style="left:833px;top:639px;width:7px;height:13px;background:#fff;border:1px solid #8691a3"></div>
<div class="abs" style="left:836px;top:642px;width:1px;height:7px;background:#6f7a8c;"></div>
<div class="abs" style="left:840px;top:637px;width:16px;height:17px;background:#dfe4ec;"></div>
<!-- status bar -->
<div class="abs" style="left:40px;top:654px;width:816px;height:22px;background:linear-gradient(#dfe3ea,#d3d8e0 45%,#c6ccd6 55%,#cdd2db);"></div>
<div class="abs" style="left:40px;top:675px;width:816px;height:1px;background:#8a93a2;"></div>
<div class="t" style="left:48.00px;top:658.49px;font-size:11px;line-height:11px;color:#2a2a3a;letter-spacing:0.505px;">Готово</div>
<div class="abs" style="left:95px;top:656px;width:1px;height:18px;background:#a4acb9;"></div>
<div class="abs" style="left:96px;top:656px;width:1px;height:18px;background:#eef1f5;"></div>
<svg style="left:104px;top:657px" width="16" height="14" viewBox="0 0 16 14"><rect x="1.5" y="1.5" width="14" height="12" fill="#f6f8fc" stroke="#3f68a8"/><rect x="2" y="2" width="13" height="3" fill="#4f86d6"/><path d="M4 7H7M9 7H13.5M4 9.5H7M9 9.5H13.5M4 12H7M9 12H13.5" stroke="#6f93cc" stroke-width="1"/><circle cx="3" cy="3" r="2.6" fill="#e0482e" stroke="#9c2414" stroke-width="0.6"/></svg>
<div class="abs" style="left:129px;top:656px;width:1px;height:18px;background:#a4acb9;"></div>
<div class="abs" style="left:130px;top:656px;width:1px;height:18px;background:#eef1f5;"></div>
<div class="t" style="left:509.30px;top:658.29px;font-size:11px;line-height:11px;color:#2a2a3a;letter-spacing:0.184px;">Количество: 15</div>
<div class="abs" style="left:599px;top:656px;width:1px;height:18px;background:#a4acb9;"></div>
<div class="abs" style="left:600px;top:656px;width:1px;height:18px;background:#eef1f5;"></div>
<div class="abs" style="left:604px;top:655px;width:19px;height:18px;background:linear-gradient(#fde391,#fbc95a 55%,#fcd776);border:1px solid #d99a34;border-radius:2px"></div>
<svg style="left:607px;top:658px" width="13" height="12" viewBox="0 0 13 12"><rect x="0.5" y="0.5" width="12" height="11" fill="#fff" stroke="#555"/><path d="M0.5 4H12.5M0.5 7.5H12.5M4.5 0.5V11.5M8.5 0.5V11.5" stroke="#555" stroke-width="1"/></svg>
<svg style="left:626px;top:658px" width="13" height="12" viewBox="0 0 13 12"><rect x="0.5" y="0.5" width="12" height="11" fill="#e6e9ee" stroke="#555"/><rect x="3" y="2.5" width="7" height="7" fill="#fff" stroke="#666" stroke-width="0.8"/><path d="M4.5 5H8.5M4.5 7H8.5" stroke="#999" stroke-width="0.8"/></svg>
<svg style="left:644px;top:658px" width="14" height="12" viewBox="0 0 14 12"><rect x="0.5" y="0.5" width="13" height="11" fill="#fff" stroke="#555"/><rect x="1" y="1" width="5" height="6" fill="#b9bec8"/><rect x="8" y="1" width="5" height="6" fill="#b9bec8"/><path d="M7 0.5V7.5M0.5 7.5H13.5" stroke="#555" stroke-width="1"/></svg>
<div class="t" style="left:670.00px;top:658.29px;font-size:11px;line-height:11px;color:#2a2a3a;letter-spacing:-0.285px;">100%</div>
<div class="abs" style="left:722px;top:664px;width:99px;height:1px;background:#8a92a0;"></div>
<div class="abs" style="left:722px;top:665px;width:99px;height:1px;background:#f2f4f7;"></div>
<svg style="left:705px;top:656px" width="17" height="17" viewBox="0 0 17 17"><circle cx="8.5" cy="8.5" r="7.5" fill="#f4f5f7" stroke="#7f8794" stroke-width="1"/><path d="M4.5 8.5H12.5" stroke="#333" stroke-width="2"/></svg>
<svg style="left:820px;top:656px" width="17" height="17" viewBox="0 0 17 17"><circle cx="8.5" cy="8.5" r="7.5" fill="#f4f5f7" stroke="#7f8794" stroke-width="1"/><path d="M4.5 8.5H12.5M8.5 4.5V12.5" stroke="#333" stroke-width="2"/></svg>
<svg style="left:767px;top:658px" width="9" height="13" viewBox="0 0 9 13"><path d="M0.5 0.5H8.5V8L4.5 12.5L0.5 8Z" fill="#f4f5f8" stroke="#6f7886" stroke-width="1"/></svg>
<svg style="left:846px;top:665px" width="9" height="9" viewBox="0 0 9 9"><rect x="6" y="0" width="2" height="2" fill="#9aa2b0"/><rect x="7" y="1" width="1" height="1" fill="#fff"/><rect x="3" y="3" width="2" height="2" fill="#9aa2b0"/><rect x="4" y="4" width="1" height="1" fill="#fff"/><rect x="6" y="3" width="2" height="2" fill="#9aa2b0"/><rect x="7" y="4" width="1" height="1" fill="#fff"/><rect x="0" y="6" width="2" height="2" fill="#9aa2b0"/><rect x="1" y="7" width="1" height="1" fill="#fff"/><rect x="3" y="6" width="2" height="2" fill="#9aa2b0"/><rect x="4" y="7" width="1" height="1" fill="#fff"/><rect x="6" y="6" width="2" height="2" fill="#9aa2b0"/><rect x="7" y="7" width="1" height="1" fill="#fff"/></svg>
</body></html>
